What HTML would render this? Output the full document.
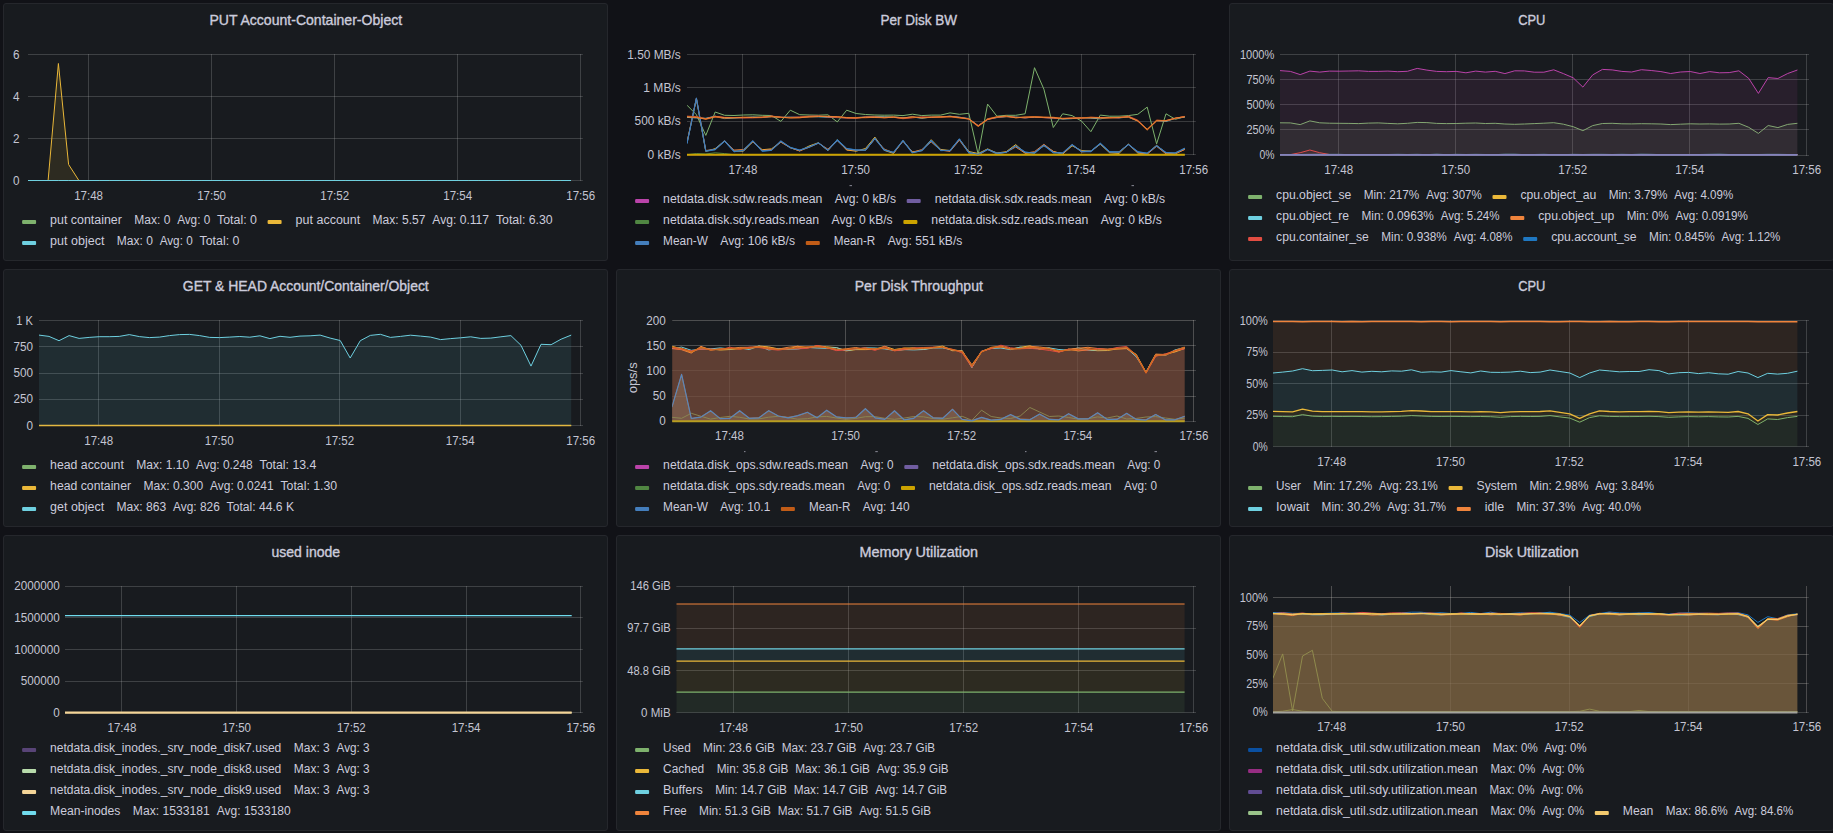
<!DOCTYPE html>
<html><head><meta charset="utf-8"><title>Dashboard</title>
<style>html,body{margin:0;padding:0;background:#111217;width:1833px;height:833px;overflow:hidden;font-family:"Liberation Sans",sans-serif}</style></head>
<body>
<svg width="1833" height="833" viewBox="0 0 1833 833" font-family="Liberation Sans, sans-serif" style="display:block;position:absolute;left:0;top:0">
<rect width="1833" height="833" fill="#111217"/>
<defs><clipPath id="c0"><rect x="28" y="51.5" width="552.8" height="131.0"/></clipPath><clipPath id="c1"><rect x="687" y="51.5" width="506.8" height="105.2"/></clipPath><clipPath id="c2"><rect x="1280" y="51.5" width="527.0" height="105.5"/></clipPath><clipPath id="c3"><rect x="39" y="317.5" width="542.0" height="110.0"/></clipPath><clipPath id="c4"><rect x="672.2" y="317.5" width="521.8" height="105.8"/></clipPath><clipPath id="c5"><rect x="1273" y="317.5" width="534.0" height="131.0"/></clipPath><clipPath id="c6"><rect x="65" y="583.2" width="515.8" height="131.4"/></clipPath><clipPath id="c7"><rect x="676.3" y="583.2" width="517.7" height="131.3"/></clipPath><clipPath id="c8"><rect x="1273" y="583.2" width="533.8" height="131.1"/></clipPath></defs>
<g id="p1"><rect x="3.5" y="3.5" width="604" height="257" rx="2.5" fill="#181b1f" stroke="#25272c"/>
<text x="209.41" y="24.50" font-size="14" fill="#ccccdc" textLength="192.78" lengthAdjust="spacingAndGlyphs" stroke="#ccccdc" stroke-width="0.35">PUT Account-Container-Object</text>
<rect x="28.0" y="54" width="554.8" height="1" fill="rgba(200,200,200,0.22)"/>
<rect x="28.0" y="96" width="554.8" height="1" fill="rgba(200,200,200,0.22)"/>
<rect x="28.0" y="138" width="554.8" height="1" fill="rgba(200,200,200,0.22)"/>
<rect x="28.0" y="180" width="554.8" height="1" fill="rgba(200,200,200,0.22)"/>
<rect x="88" y="54" width="1" height="127" fill="rgba(200,200,200,0.22)"/>
<rect x="211" y="54" width="1" height="127" fill="rgba(200,200,200,0.22)"/>
<rect x="334" y="54" width="1" height="127" fill="rgba(200,200,200,0.22)"/>
<rect x="457" y="54" width="1" height="127" fill="rgba(200,200,200,0.22)"/>
<rect x="580" y="54" width="1" height="127" fill="rgba(200,200,200,0.22)"/>
<g clip-path="url(#c0)"><polygon points="27.6,180.5 37.9,180.5 48.1,180.5 58.4,180.5 68.6,180.5 78.9,180.5 89.1,180.5 99.4,180.5 109.6,180.5 119.9,180.5 130.1,180.5 140.4,180.5 150.6,180.5 160.9,180.5 171.1,180.5 181.4,180.5 191.6,180.5 201.9,180.5 212.1,180.5 222.4,180.5 232.6,180.5 242.9,180.5 253.1,180.5 263.4,180.5 273.7,180.5 283.9,180.5 294.2,180.5 304.4,180.5 314.7,180.5 324.9,180.5 335.2,180.5 345.4,180.5 355.7,180.5 365.9,180.5 376.2,180.5 386.4,180.5 396.7,180.5 406.9,180.5 417.2,180.5 427.4,180.5 437.7,180.5 447.9,180.5 458.2,180.5 468.4,180.5 478.7,180.5 488.9,180.5 499.2,180.5 509.4,180.5 519.7,180.5 530.0,180.5 540.2,180.5 550.5,180.5 560.7,180.5 571.0,180.5 571.0,180.5 560.7,180.5 550.5,180.5 540.2,180.5 530.0,180.5 519.7,180.5 509.4,180.5 499.2,180.5 488.9,180.5 478.7,180.5 468.4,180.5 458.2,180.5 447.9,180.5 437.7,180.5 427.4,180.5 417.2,180.5 406.9,180.5 396.7,180.5 386.4,180.5 376.2,180.5 365.9,180.5 355.7,180.5 345.4,180.5 335.2,180.5 324.9,180.5 314.7,180.5 304.4,180.5 294.2,180.5 283.9,180.5 273.7,180.5 263.4,180.5 253.1,180.5 242.9,180.5 232.6,180.5 222.4,180.5 212.1,180.5 201.9,180.5 191.6,180.5 181.4,180.5 171.1,180.5 160.9,180.5 150.6,180.5 140.4,180.5 130.1,180.5 119.9,180.5 109.6,180.5 99.4,180.5 89.1,180.5 78.9,180.5 68.6,180.5 58.4,180.5 48.1,180.5 37.9,180.5 27.6,180.5" fill="#7EB26D" fill-opacity="0.1"/><polyline points="27.6,180.5 37.9,180.5 48.1,180.5 58.4,180.5 68.6,180.5 78.9,180.5 89.1,180.5 99.4,180.5 109.6,180.5 119.9,180.5 130.1,180.5 140.4,180.5 150.6,180.5 160.9,180.5 171.1,180.5 181.4,180.5 191.6,180.5 201.9,180.5 212.1,180.5 222.4,180.5 232.6,180.5 242.9,180.5 253.1,180.5 263.4,180.5 273.7,180.5 283.9,180.5 294.2,180.5 304.4,180.5 314.7,180.5 324.9,180.5 335.2,180.5 345.4,180.5 355.7,180.5 365.9,180.5 376.2,180.5 386.4,180.5 396.7,180.5 406.9,180.5 417.2,180.5 427.4,180.5 437.7,180.5 447.9,180.5 458.2,180.5 468.4,180.5 478.7,180.5 488.9,180.5 499.2,180.5 509.4,180.5 519.7,180.5 530.0,180.5 540.2,180.5 550.5,180.5 560.7,180.5 571.0,180.5" fill="none" stroke="#7EB26D" stroke-width="1.0" stroke-linejoin="round"/><polygon points="27.6,180.5 37.9,180.5 48.1,180.5 58.4,63.5 68.6,164.5 78.9,180.5 89.1,180.5 99.4,180.5 109.6,180.5 119.9,180.5 130.1,180.5 140.4,180.5 150.6,180.5 160.9,180.5 171.1,180.5 181.4,180.5 191.6,180.5 201.9,180.5 212.1,180.5 222.4,180.5 232.6,180.5 242.9,180.5 253.1,180.5 263.4,180.5 273.7,180.5 283.9,180.5 294.2,180.5 304.4,180.5 314.7,180.5 324.9,180.5 335.2,180.5 345.4,180.5 355.7,180.5 365.9,180.5 376.2,180.5 386.4,180.5 396.7,180.5 406.9,180.5 417.2,180.5 427.4,180.5 437.7,180.5 447.9,180.5 458.2,180.5 468.4,180.5 478.7,180.5 488.9,180.5 499.2,180.5 509.4,180.5 519.7,180.5 530.0,180.5 540.2,180.5 550.5,180.5 560.7,180.5 571.0,180.5 571.0,180.5 560.7,180.5 550.5,180.5 540.2,180.5 530.0,180.5 519.7,180.5 509.4,180.5 499.2,180.5 488.9,180.5 478.7,180.5 468.4,180.5 458.2,180.5 447.9,180.5 437.7,180.5 427.4,180.5 417.2,180.5 406.9,180.5 396.7,180.5 386.4,180.5 376.2,180.5 365.9,180.5 355.7,180.5 345.4,180.5 335.2,180.5 324.9,180.5 314.7,180.5 304.4,180.5 294.2,180.5 283.9,180.5 273.7,180.5 263.4,180.5 253.1,180.5 242.9,180.5 232.6,180.5 222.4,180.5 212.1,180.5 201.9,180.5 191.6,180.5 181.4,180.5 171.1,180.5 160.9,180.5 150.6,180.5 140.4,180.5 130.1,180.5 119.9,180.5 109.6,180.5 99.4,180.5 89.1,180.5 78.9,180.5 68.6,180.5 58.4,180.5 48.1,180.5 37.9,180.5 27.6,180.5" fill="#EAB839" fill-opacity="0.1"/><polyline points="27.6,180.5 37.9,180.5 48.1,180.5 58.4,63.5 68.6,164.5 78.9,180.5 89.1,180.5 99.4,180.5 109.6,180.5 119.9,180.5 130.1,180.5 140.4,180.5 150.6,180.5 160.9,180.5 171.1,180.5 181.4,180.5 191.6,180.5 201.9,180.5 212.1,180.5 222.4,180.5 232.6,180.5 242.9,180.5 253.1,180.5 263.4,180.5 273.7,180.5 283.9,180.5 294.2,180.5 304.4,180.5 314.7,180.5 324.9,180.5 335.2,180.5 345.4,180.5 355.7,180.5 365.9,180.5 376.2,180.5 386.4,180.5 396.7,180.5 406.9,180.5 417.2,180.5 427.4,180.5 437.7,180.5 447.9,180.5 458.2,180.5 468.4,180.5 478.7,180.5 488.9,180.5 499.2,180.5 509.4,180.5 519.7,180.5 530.0,180.5 540.2,180.5 550.5,180.5 560.7,180.5 571.0,180.5" fill="none" stroke="#EAB839" stroke-width="1.0" stroke-linejoin="round"/><polygon points="27.6,180.5 37.9,180.5 48.1,180.5 58.4,180.5 68.6,180.5 78.9,180.5 89.1,180.5 99.4,180.5 109.6,180.5 119.9,180.5 130.1,180.5 140.4,180.5 150.6,180.5 160.9,180.5 171.1,180.5 181.4,180.5 191.6,180.5 201.9,180.5 212.1,180.5 222.4,180.5 232.6,180.5 242.9,180.5 253.1,180.5 263.4,180.5 273.7,180.5 283.9,180.5 294.2,180.5 304.4,180.5 314.7,180.5 324.9,180.5 335.2,180.5 345.4,180.5 355.7,180.5 365.9,180.5 376.2,180.5 386.4,180.5 396.7,180.5 406.9,180.5 417.2,180.5 427.4,180.5 437.7,180.5 447.9,180.5 458.2,180.5 468.4,180.5 478.7,180.5 488.9,180.5 499.2,180.5 509.4,180.5 519.7,180.5 530.0,180.5 540.2,180.5 550.5,180.5 560.7,180.5 571.0,180.5 571.0,180.5 560.7,180.5 550.5,180.5 540.2,180.5 530.0,180.5 519.7,180.5 509.4,180.5 499.2,180.5 488.9,180.5 478.7,180.5 468.4,180.5 458.2,180.5 447.9,180.5 437.7,180.5 427.4,180.5 417.2,180.5 406.9,180.5 396.7,180.5 386.4,180.5 376.2,180.5 365.9,180.5 355.7,180.5 345.4,180.5 335.2,180.5 324.9,180.5 314.7,180.5 304.4,180.5 294.2,180.5 283.9,180.5 273.7,180.5 263.4,180.5 253.1,180.5 242.9,180.5 232.6,180.5 222.4,180.5 212.1,180.5 201.9,180.5 191.6,180.5 181.4,180.5 171.1,180.5 160.9,180.5 150.6,180.5 140.4,180.5 130.1,180.5 119.9,180.5 109.6,180.5 99.4,180.5 89.1,180.5 78.9,180.5 68.6,180.5 58.4,180.5 48.1,180.5 37.9,180.5 27.6,180.5" fill="#6ED0E0" fill-opacity="0.1"/><polyline points="27.6,180.5 37.9,180.5 48.1,180.5 58.4,180.5 68.6,180.5 78.9,180.5 89.1,180.5 99.4,180.5 109.6,180.5 119.9,180.5 130.1,180.5 140.4,180.5 150.6,180.5 160.9,180.5 171.1,180.5 181.4,180.5 191.6,180.5 201.9,180.5 212.1,180.5 222.4,180.5 232.6,180.5 242.9,180.5 253.1,180.5 263.4,180.5 273.7,180.5 283.9,180.5 294.2,180.5 304.4,180.5 314.7,180.5 324.9,180.5 335.2,180.5 345.4,180.5 355.7,180.5 365.9,180.5 376.2,180.5 386.4,180.5 396.7,180.5 406.9,180.5 417.2,180.5 427.4,180.5 437.7,180.5 447.9,180.5 458.2,180.5 468.4,180.5 478.7,180.5 488.9,180.5 499.2,180.5 509.4,180.5 519.7,180.5 530.0,180.5 540.2,180.5 550.5,180.5 560.7,180.5 571.0,180.5" fill="none" stroke="#6ED0E0" stroke-width="1.0" stroke-linejoin="round"/></g>
<text x="13.09" y="58.60" font-size="12" fill="#c4c5d2" textLength="6.51" lengthAdjust="spacingAndGlyphs">6</text>
<text x="13.09" y="100.60" font-size="12" fill="#c4c5d2" textLength="6.51" lengthAdjust="spacingAndGlyphs">4</text>
<text x="13.09" y="142.60" font-size="12" fill="#c4c5d2" textLength="6.51" lengthAdjust="spacingAndGlyphs">2</text>
<text x="13.09" y="184.60" font-size="12" fill="#c4c5d2" textLength="6.51" lengthAdjust="spacingAndGlyphs">0</text>
<text x="74.18" y="199.50" font-size="12" fill="#c4c5d2" textLength="28.84" lengthAdjust="spacingAndGlyphs">17:48</text>
<text x="197.20" y="199.50" font-size="12" fill="#c4c5d2" textLength="28.84" lengthAdjust="spacingAndGlyphs">17:50</text>
<text x="320.23" y="199.50" font-size="12" fill="#c4c5d2" textLength="28.84" lengthAdjust="spacingAndGlyphs">17:52</text>
<text x="443.25" y="199.50" font-size="12" fill="#c4c5d2" textLength="28.84" lengthAdjust="spacingAndGlyphs">17:54</text>
<text x="566.28" y="199.50" font-size="12" fill="#c4c5d2" textLength="28.84" lengthAdjust="spacingAndGlyphs">17:56</text>
<rect x="22.1" y="220.1" width="14" height="4" rx="1" fill="#7EB26D"/>
<text x="50.10" y="224.40" font-size="12" fill="#ccccdc" textLength="71.78" lengthAdjust="spacingAndGlyphs">put container</text>
<text x="134.28" y="224.40" font-size="12" fill="#ccccdc" textLength="36.06" lengthAdjust="spacingAndGlyphs">Max: 0</text>
<text x="177.13" y="224.40" font-size="12" fill="#ccccdc" textLength="33.06" lengthAdjust="spacingAndGlyphs">Avg: 0</text>
<text x="217.00" y="224.40" font-size="12" fill="#ccccdc" textLength="39.93" lengthAdjust="spacingAndGlyphs">Total: 0</text>
<rect x="267.6" y="220.1" width="14" height="4" rx="1" fill="#EAB839"/>
<text x="295.63" y="224.40" font-size="12" fill="#ccccdc" textLength="64.56" lengthAdjust="spacingAndGlyphs">put account</text>
<text x="372.59" y="224.40" font-size="12" fill="#ccccdc" textLength="52.93" lengthAdjust="spacingAndGlyphs">Max: 5.57</text>
<text x="432.32" y="224.40" font-size="12" fill="#ccccdc" textLength="56.78" lengthAdjust="spacingAndGlyphs">Avg: 0.117</text>
<text x="495.90" y="224.40" font-size="12" fill="#ccccdc" textLength="56.81" lengthAdjust="spacingAndGlyphs">Total: 6.30</text>
<rect x="22.1" y="241.1" width="14" height="4" rx="1" fill="#6ED0E0"/>
<text x="50.10" y="245.40" font-size="12" fill="#ccccdc" textLength="54.29" lengthAdjust="spacingAndGlyphs">put object</text>
<text x="116.79" y="245.40" font-size="12" fill="#ccccdc" textLength="36.06" lengthAdjust="spacingAndGlyphs">Max: 0</text>
<text x="159.65" y="245.40" font-size="12" fill="#ccccdc" textLength="33.06" lengthAdjust="spacingAndGlyphs">Avg: 0</text>
<text x="199.52" y="245.40" font-size="12" fill="#ccccdc" textLength="39.93" lengthAdjust="spacingAndGlyphs">Total: 0</text></g>
<g id="p2"><text x="880.48" y="24.50" font-size="14" fill="#ccccdc" textLength="76.64" lengthAdjust="spacingAndGlyphs" stroke="#ccccdc" stroke-width="0.35">Per Disk BW</text>
<rect x="687.0" y="54" width="508.8" height="1" fill="rgba(200,200,200,0.22)"/>
<rect x="687.0" y="87" width="508.8" height="1" fill="rgba(200,200,200,0.22)"/>
<rect x="687.0" y="121" width="508.8" height="1" fill="rgba(200,200,200,0.22)"/>
<rect x="687.0" y="154" width="508.8" height="1" fill="rgba(200,200,200,0.22)"/>
<rect x="742" y="54" width="1" height="101" fill="rgba(200,200,200,0.22)"/>
<rect x="855" y="54" width="1" height="101" fill="rgba(200,200,200,0.22)"/>
<rect x="968" y="54" width="1" height="101" fill="rgba(200,200,200,0.22)"/>
<rect x="1081" y="54" width="1" height="101" fill="rgba(200,200,200,0.22)"/>
<rect x="1193" y="54" width="1" height="101" fill="rgba(200,200,200,0.22)"/>
<g clip-path="url(#c1)"><polyline points="687.0,105.2 696.4,114.7 705.8,135.4 715.2,112.0 724.6,115.3 734.0,115.5 743.4,115.0 752.8,114.8 762.2,115.3 771.5,115.5 780.9,121.4 790.3,110.2 799.7,114.7 809.1,115.0 818.5,115.2 827.9,114.8 837.3,121.9 846.7,110.2 856.1,113.5 865.5,114.5 874.9,115.0 884.2,115.2 893.6,115.1 903.0,115.6 912.4,114.2 921.8,115.6 931.2,115.1 940.6,115.1 950.0,112.9 959.4,114.3 968.8,113.3 978.2,154.4 987.6,104.1 996.9,116.2 1006.3,115.3 1015.7,115.3 1025.1,113.8 1034.5,67.7 1043.9,89.2 1053.3,127.5 1062.7,113.8 1072.1,115.6 1081.5,121.1 1090.9,131.7 1100.3,115.1 1109.6,116.2 1119.0,116.2 1128.4,115.6 1137.8,114.3 1147.2,107.1 1156.6,143.9 1166.0,113.8 1175.4,119.3 1184.8,116.5" fill="none" stroke="#7EB26D" stroke-width="1.0" stroke-linejoin="round"/><polyline points="687.0,142.5 696.4,98.9 705.8,151.5 715.2,148.6 724.6,140.9 734.0,151.1 743.4,151.2 752.8,141.7 762.2,149.7 771.5,148.9 780.9,141.8 790.3,147.6 799.7,150.8 809.1,146.0 818.5,142.7 827.9,150.7 837.3,139.6 846.7,150.0 856.1,151.2 865.5,148.5 874.9,137.1 884.2,150.3 893.6,153.4 903.0,140.6 912.4,152.0 921.8,150.6 931.2,139.7 940.6,149.4 950.0,150.6 959.4,139.2 968.8,151.5 978.2,153.5 987.6,148.9 996.9,153.0 1006.3,151.7 1015.7,144.6 1025.1,153.1 1034.5,152.9 1043.9,145.6 1053.3,151.4 1062.7,154.0 1072.1,145.8 1081.5,150.6 1090.9,151.1 1100.3,144.2 1109.6,152.8 1119.0,153.4 1128.4,144.1 1137.8,153.1 1147.2,153.6 1156.6,145.3 1166.0,153.0 1175.4,153.7 1184.8,149.1" fill="none" stroke="#EAB839" stroke-width="1.0" stroke-linejoin="round"/><polyline points="687.0,117.4 696.4,117.9 705.8,118.3 715.2,116.2 724.6,118.6 734.0,118.0 743.4,117.6 752.8,117.0 762.2,117.4 771.5,116.6 780.9,117.4 790.3,117.2 799.7,117.4 809.1,116.7 818.5,116.8 827.9,117.2 837.3,117.6 846.7,117.7 856.1,117.6 865.5,117.1 874.9,116.5 884.2,116.8 893.6,116.9 903.0,117.8 912.4,117.0 921.8,118.2 931.2,117.1 940.6,117.0 950.0,116.2 959.4,117.2 968.8,118.6 978.2,125.7 987.6,119.0 996.9,117.6 1006.3,116.6 1015.7,117.1 1025.1,117.8 1034.5,117.2 1043.9,117.5 1053.3,118.1 1062.7,119.0 1072.1,118.6 1081.5,117.6 1090.9,118.1 1100.3,118.8 1109.6,117.4 1119.0,117.8 1128.4,117.2 1137.8,120.9 1147.2,129.8 1156.6,120.5 1166.0,121.4 1175.4,118.4 1184.8,117.2" fill="none" stroke="#6ED0E0" stroke-width="1.0" stroke-linejoin="round"/><polyline points="687.0,142.8 696.4,98.1 705.8,150.5 715.2,149.5 724.6,141.2 734.0,150.1 743.4,149.5 752.8,141.8 762.2,150.2 771.5,149.5 780.9,142.2 790.3,147.7 799.7,151.0 809.1,147.2 818.5,143.2 827.9,149.2 837.3,140.6 846.7,149.8 856.1,150.2 865.5,150.4 874.9,138.8 884.2,149.0 893.6,152.9 903.0,141.2 912.4,152.2 921.8,149.6 931.2,141.9 940.6,150.1 950.0,151.4 959.4,140.2 968.8,152.8 978.2,155.3 987.6,149.4 996.9,153.9 1006.3,152.1 1015.7,147.0 1025.1,153.2 1034.5,151.7 1043.9,144.3 1053.3,151.5 1062.7,154.0 1072.1,144.7 1081.5,151.9 1090.9,151.1 1100.3,143.7 1109.6,151.9 1119.0,151.8 1128.4,144.5 1137.8,152.4 1147.2,154.2 1156.6,146.3 1166.0,153.9 1175.4,153.7 1184.8,149.5" fill="none" stroke="#EF843C" stroke-width="1.0" stroke-linejoin="round"/><polyline points="687.0,116.2 696.4,116.6 705.8,118.8 715.2,116.3 724.6,117.4 734.0,117.5 743.4,118.0 752.8,117.8 762.2,117.6 771.5,116.0 780.9,117.3 790.3,117.4 799.7,117.0 809.1,116.2 818.5,116.0 827.9,117.0 837.3,117.4 846.7,118.1 856.1,118.2 865.5,117.0 874.9,116.9 884.2,117.7 893.6,117.3 903.0,118.7 912.4,117.8 921.8,116.9 931.2,117.2 940.6,117.2 950.0,116.7 959.4,117.4 968.8,118.9 978.2,125.6 987.6,119.7 996.9,117.4 1006.3,116.4 1015.7,117.3 1025.1,117.9 1034.5,116.8 1043.9,117.7 1053.3,118.1 1062.7,118.6 1072.1,118.0 1081.5,118.0 1090.9,117.3 1100.3,117.5 1109.6,117.6 1119.0,117.9 1128.4,116.1 1137.8,120.2 1147.2,129.9 1156.6,120.2 1166.0,120.8 1175.4,118.3 1184.8,116.4" fill="none" stroke="#E24D42" stroke-width="1.0" stroke-linejoin="round"/><polyline points="687.0,143.7 696.4,98.4 705.8,151.3 715.2,149.9 724.6,141.3 734.0,151.9 743.4,150.0 752.8,140.9 762.2,151.5 771.5,150.4 780.9,141.6 790.3,147.2 799.7,150.1 809.1,146.9 818.5,142.9 827.9,150.3 837.3,139.5 846.7,148.4 856.1,149.8 865.5,150.4 874.9,138.7 884.2,149.6 893.6,152.7 903.0,140.3 912.4,152.9 921.8,150.2 931.2,140.1 940.6,150.7 950.0,150.3 959.4,138.8 968.8,153.0 978.2,154.8 987.6,149.3 996.9,153.9 1006.3,152.3 1015.7,146.1 1025.1,151.8 1034.5,153.5 1043.9,145.5 1053.3,153.0 1062.7,153.4 1072.1,144.5 1081.5,151.4 1090.9,151.0 1100.3,143.1 1109.6,151.5 1119.0,151.9 1128.4,144.5 1137.8,151.4 1147.2,153.4 1156.6,145.6 1166.0,152.4 1175.4,153.3 1184.8,148.2" fill="none" stroke="#1F78C1" stroke-width="1.0" stroke-linejoin="round"/><polyline points="687.0,154.7 696.4,154.7 705.8,154.7 715.2,154.7 724.6,154.7 734.0,154.7 743.4,154.7 752.8,154.7 762.2,154.7 771.5,154.7 780.9,154.7 790.3,154.7 799.7,154.7 809.1,154.7 818.5,154.7 827.9,154.7 837.3,154.7 846.7,154.7 856.1,154.7 865.5,154.7 874.9,154.7 884.2,154.7 893.6,154.7 903.0,154.7 912.4,154.7 921.8,154.7 931.2,154.7 940.6,154.7 950.0,154.7 959.4,154.7 968.8,154.7 978.2,154.7 987.6,154.7 996.9,154.7 1006.3,154.7 1015.7,154.7 1025.1,154.7 1034.5,154.7 1043.9,154.7 1053.3,154.7 1062.7,154.7 1072.1,154.7 1081.5,154.7 1090.9,154.7 1100.3,154.7 1109.6,154.7 1119.0,154.7 1128.4,154.7 1137.8,154.7 1147.2,154.7 1156.6,154.7 1166.0,154.7 1175.4,154.7 1184.8,154.7" fill="none" stroke="#BA43A9" stroke-width="1.0" stroke-linejoin="round"/><polyline points="687.0,154.7 696.4,154.7 705.8,154.7 715.2,154.7 724.6,154.7 734.0,154.7 743.4,154.7 752.8,154.7 762.2,154.7 771.5,154.7 780.9,154.7 790.3,154.7 799.7,154.7 809.1,154.7 818.5,154.7 827.9,154.7 837.3,154.7 846.7,154.7 856.1,154.7 865.5,154.7 874.9,154.7 884.2,154.7 893.6,154.7 903.0,154.7 912.4,154.7 921.8,154.7 931.2,154.7 940.6,154.7 950.0,154.7 959.4,154.7 968.8,154.7 978.2,154.7 987.6,154.7 996.9,154.7 1006.3,154.7 1015.7,154.7 1025.1,154.7 1034.5,154.7 1043.9,154.7 1053.3,154.7 1062.7,154.7 1072.1,154.7 1081.5,154.7 1090.9,154.7 1100.3,154.7 1109.6,154.7 1119.0,154.7 1128.4,154.7 1137.8,154.7 1147.2,154.7 1156.6,154.7 1166.0,154.7 1175.4,154.7 1184.8,154.7" fill="none" stroke="#705DA0" stroke-width="1.0" stroke-linejoin="round"/><polyline points="687.0,154.7 696.4,153.6 705.8,154.0 715.2,152.8 724.6,153.6 734.0,154.7 743.4,154.7 752.8,154.7 762.2,154.7 771.5,154.7 780.9,154.7 790.3,154.7 799.7,154.7 809.1,154.7 818.5,154.7 827.9,154.7 837.3,154.7 846.7,154.7 856.1,154.7 865.5,154.7 874.9,154.7 884.2,154.7 893.6,154.7 903.0,154.7 912.4,154.7 921.8,154.7 931.2,154.7 940.6,154.7 950.0,154.7 959.4,154.7 968.8,154.7 978.2,154.7 987.6,154.7 996.9,154.7 1006.3,154.7 1015.7,154.7 1025.1,154.7 1034.5,154.7 1043.9,154.7 1053.3,154.7 1062.7,154.7 1072.1,154.7 1081.5,154.7 1090.9,154.7 1100.3,154.7 1109.6,154.7 1119.0,154.7 1128.4,154.7 1137.8,154.7 1147.2,154.7 1156.6,154.7 1166.0,154.7 1175.4,154.7 1184.8,154.7" fill="none" stroke="#508642" stroke-width="1.0" stroke-linejoin="round"/><polyline points="687.0,154.7 696.4,154.7 705.8,154.7 715.2,154.7 724.6,154.7 734.0,154.7 743.4,154.7 752.8,154.7 762.2,154.7 771.5,154.7 780.9,154.7 790.3,154.7 799.7,154.7 809.1,154.7 818.5,154.7 827.9,154.7 837.3,154.7 846.7,154.7 856.1,154.7 865.5,154.7 874.9,154.7 884.2,154.7 893.6,154.7 903.0,154.7 912.4,154.7 921.8,154.7 931.2,154.7 940.6,154.7 950.0,154.7 959.4,154.7 968.8,154.7 978.2,154.7 987.6,154.7 996.9,154.7 1006.3,154.7 1015.7,154.7 1025.1,154.7 1034.5,154.7 1043.9,154.7 1053.3,154.7 1062.7,154.7 1072.1,154.7 1081.5,154.7 1090.9,154.7 1100.3,154.7 1109.6,154.7 1119.0,154.7 1128.4,154.7 1137.8,154.7 1147.2,154.7 1156.6,154.7 1166.0,154.7 1175.4,154.7 1184.8,154.7" fill="none" stroke="#CCA300" stroke-width="2" stroke-linejoin="round"/><polyline points="687.0,143.5 696.4,98.0 705.8,150.8 715.2,149.2 724.6,140.9 734.0,151.2 743.4,150.8 752.8,140.9 762.2,150.8 771.5,150.1 780.9,140.9 790.3,147.8 799.7,150.1 809.1,147.3 818.5,142.9 827.9,150.1 837.3,140.3 846.7,148.8 856.1,150.1 865.5,149.8 874.9,138.3 884.2,150.1 893.6,152.2 903.0,140.9 912.4,152.8 921.8,150.8 931.2,140.9 940.6,150.1 950.0,150.8 959.4,139.2 968.8,152.2 978.2,154.2 987.6,149.6 996.9,153.1 1006.3,152.2 1015.7,145.9 1025.1,152.2 1034.5,152.8 1043.9,145.2 1053.3,152.2 1062.7,152.8 1072.1,144.8 1081.5,151.6 1090.9,151.6 1100.3,143.6 1109.6,152.2 1119.0,152.2 1128.4,144.3 1137.8,152.2 1147.2,153.1 1156.6,145.9 1166.0,152.8 1175.4,152.8 1184.8,148.2" fill="none" stroke="#447EBC" stroke-width="1.1" stroke-linejoin="round"/><polyline points="687.0,116.7 696.4,117.2 705.8,119.0 715.2,116.9 724.6,118.0 734.0,117.6 743.4,117.3 752.8,117.3 762.2,117.2 771.5,116.4 780.9,117.3 790.3,117.7 799.7,117.5 809.1,116.9 818.5,116.4 827.9,116.4 837.3,116.9 846.7,117.6 856.1,117.7 865.5,117.5 874.9,117.2 884.2,117.5 893.6,117.0 903.0,118.1 912.4,117.2 921.8,117.6 931.2,117.1 940.6,117.0 950.0,116.7 959.4,117.9 968.8,118.9 978.2,126.3 987.6,119.0 996.9,116.8 1006.3,116.3 1015.7,117.6 1025.1,117.2 1034.5,116.7 1043.9,117.1 1053.3,117.5 1062.7,118.5 1072.1,118.1 1081.5,117.8 1090.9,117.4 1100.3,118.0 1109.6,117.9 1119.0,117.4 1128.4,116.9 1137.8,120.9 1147.2,129.7 1156.6,120.5 1166.0,120.7 1175.4,118.4 1184.8,116.7" fill="none" stroke="#C15C17" stroke-width="1.3" stroke-linejoin="round"/><polyline points="687.0,116.9 696.4,117.5 705.8,119.0 715.2,116.7 724.6,117.6 734.0,117.8 743.4,117.3 752.8,117.6 762.2,117.1 771.5,116.7 780.9,117.1 790.3,118.0 799.7,117.7 809.1,116.8 818.5,116.5 827.9,116.5 837.3,116.6 846.7,117.7 856.1,118.0 865.5,117.3 874.9,117.5 884.2,117.7 893.6,117.3 903.0,118.0 912.4,116.8 921.8,117.9 931.2,117.4 940.6,116.9 950.0,116.3 959.4,117.6 968.8,119.0 978.2,126.1 987.6,119.4 996.9,116.9 1006.3,116.0 1015.7,117.8 1025.1,117.1 1034.5,117.1 1043.9,117.4 1053.3,117.5 1062.7,118.7 1072.1,118.3 1081.5,118.1 1090.9,117.8 1100.3,117.6 1109.6,117.8 1119.0,117.5 1128.4,116.7 1137.8,121.0 1147.2,129.3 1156.6,120.9 1166.0,120.7 1175.4,118.0 1184.8,116.8" fill="none" stroke="#EF843C" stroke-width="0.9" stroke-linejoin="round"/></g>
<text x="627.26" y="58.60" font-size="12" fill="#c4c5d2" textLength="53.54" lengthAdjust="spacingAndGlyphs">1.50 MB/s</text>
<text x="643.33" y="92.00" font-size="12" fill="#c4c5d2" textLength="37.47" lengthAdjust="spacingAndGlyphs">1 MB/s</text>
<text x="634.56" y="125.40" font-size="12" fill="#c4c5d2" textLength="46.24" lengthAdjust="spacingAndGlyphs">500 kB/s</text>
<text x="647.57" y="158.80" font-size="12" fill="#c4c5d2" textLength="33.23" lengthAdjust="spacingAndGlyphs">0 kB/s</text>
<text x="728.48" y="173.70" font-size="12" fill="#c4c5d2" textLength="28.84" lengthAdjust="spacingAndGlyphs">17:48</text>
<text x="841.18" y="173.70" font-size="12" fill="#c4c5d2" textLength="28.84" lengthAdjust="spacingAndGlyphs">17:50</text>
<text x="953.88" y="173.70" font-size="12" fill="#c4c5d2" textLength="28.84" lengthAdjust="spacingAndGlyphs">17:52</text>
<text x="1066.58" y="173.70" font-size="12" fill="#c4c5d2" textLength="28.84" lengthAdjust="spacingAndGlyphs">17:54</text>
<text x="1179.28" y="173.70" font-size="12" fill="#c4c5d2" textLength="28.84" lengthAdjust="spacingAndGlyphs">17:56</text>
<rect x="635.1" y="199.1" width="14" height="4" rx="1" fill="#BA43A9"/>
<text x="663.10" y="203.40" font-size="12" fill="#ccccdc" textLength="159.36" lengthAdjust="spacingAndGlyphs">netdata.disk.sdw.reads.mean</text>
<text x="834.86" y="203.40" font-size="12" fill="#ccccdc" textLength="61.11" lengthAdjust="spacingAndGlyphs">Avg: 0 kB/s</text>
<rect x="906.7" y="199.1" width="14" height="4" rx="1" fill="#705DA0"/>
<text x="934.67" y="203.40" font-size="12" fill="#ccccdc" textLength="156.97" lengthAdjust="spacingAndGlyphs">netdata.disk.sdx.reads.mean</text>
<text x="1104.05" y="203.40" font-size="12" fill="#ccccdc" textLength="61.11" lengthAdjust="spacingAndGlyphs">Avg: 0 kB/s</text>
<rect x="635.1" y="220.1" width="14" height="4" rx="1" fill="#508642"/>
<text x="663.10" y="224.40" font-size="12" fill="#ccccdc" textLength="156.05" lengthAdjust="spacingAndGlyphs">netdata.disk.sdy.reads.mean</text>
<text x="831.55" y="224.40" font-size="12" fill="#ccccdc" textLength="61.11" lengthAdjust="spacingAndGlyphs">Avg: 0 kB/s</text>
<rect x="903.4" y="220.1" width="14" height="4" rx="1" fill="#CCA300"/>
<text x="931.36" y="224.40" font-size="12" fill="#ccccdc" textLength="156.97" lengthAdjust="spacingAndGlyphs">netdata.disk.sdz.reads.mean</text>
<text x="1100.74" y="224.40" font-size="12" fill="#ccccdc" textLength="61.11" lengthAdjust="spacingAndGlyphs">Avg: 0 kB/s</text>
<rect x="635.1" y="241.1" width="14" height="4" rx="1" fill="#447EBC"/>
<text x="663.10" y="245.40" font-size="12" fill="#ccccdc" textLength="44.80" lengthAdjust="spacingAndGlyphs">Mean-W</text>
<text x="720.30" y="245.40" font-size="12" fill="#ccccdc" textLength="74.77" lengthAdjust="spacingAndGlyphs">Avg: 106 kB/s</text>
<rect x="805.8" y="241.1" width="14" height="4" rx="1" fill="#C15C17"/>
<text x="833.78" y="245.40" font-size="12" fill="#ccccdc" textLength="41.49" lengthAdjust="spacingAndGlyphs">Mean-R</text>
<text x="887.67" y="245.40" font-size="12" fill="#ccccdc" textLength="74.77" lengthAdjust="spacingAndGlyphs">Avg: 551 kB/s</text>
<rect x="849.5" y="185.3" width="2.5" height="0.8" fill="#ccccdc" opacity="0.8"/>
<rect x="1131.5" y="185.3" width="2.5" height="0.8" fill="#ccccdc" opacity="0.8"/></g>
<g id="p3"><rect x="1229.5" y="3.5" width="604" height="257" rx="2.5" fill="#181b1f" stroke="#25272c"/>
<text x="1518.18" y="24.50" font-size="14" fill="#ccccdc" textLength="27.23" lengthAdjust="spacingAndGlyphs" stroke="#ccccdc" stroke-width="0.35">CPU</text>
<rect x="1280.0" y="54" width="529.0" height="1" fill="rgba(200,200,200,0.22)"/>
<rect x="1280.0" y="79" width="529.0" height="1" fill="rgba(200,200,200,0.22)"/>
<rect x="1280.0" y="104" width="529.0" height="1" fill="rgba(200,200,200,0.22)"/>
<rect x="1280.0" y="129" width="529.0" height="1" fill="rgba(200,200,200,0.22)"/>
<rect x="1280.0" y="155" width="529.0" height="1" fill="rgba(200,200,200,0.22)"/>
<rect x="1338" y="54" width="1" height="102" fill="rgba(200,200,200,0.22)"/>
<rect x="1455" y="54" width="1" height="102" fill="rgba(200,200,200,0.22)"/>
<rect x="1572" y="54" width="1" height="102" fill="rgba(200,200,200,0.22)"/>
<rect x="1689" y="54" width="1" height="102" fill="rgba(200,200,200,0.22)"/>
<rect x="1806" y="54" width="1" height="102" fill="rgba(200,200,200,0.22)"/>
<g clip-path="url(#c2)"><polygon points="1280.0,122.8 1290.4,122.9 1300.2,124.6 1309.9,120.9 1319.7,122.8 1329.4,123.2 1339.2,123.3 1348.9,123.4 1358.7,123.6 1368.4,123.1 1378.2,122.9 1387.9,123.4 1397.7,123.8 1407.4,123.3 1417.2,122.4 1426.9,122.6 1436.7,123.4 1446.4,123.6 1456.2,123.5 1465.9,123.2 1475.7,123.0 1485.4,123.5 1495.2,123.3 1504.9,124.0 1514.7,124.3 1524.4,124.0 1534.2,123.6 1543.9,123.2 1553.7,122.7 1563.4,124.2 1573.2,126.7 1582.9,130.7 1592.7,125.6 1602.4,123.5 1612.2,123.3 1621.9,123.8 1631.7,123.9 1641.4,123.7 1651.2,123.8 1660.9,124.0 1670.7,124.6 1680.4,124.2 1690.2,123.8 1699.9,124.0 1709.7,123.9 1719.4,124.1 1729.2,124.0 1738.9,123.3 1748.7,127.3 1758.4,133.4 1768.2,125.5 1777.9,127.6 1787.7,124.4 1797.4,123.3 1797.4,155.0 1787.7,155.0 1777.9,155.0 1768.2,155.0 1758.4,155.0 1748.7,155.0 1738.9,155.0 1729.2,155.0 1719.4,155.0 1709.7,155.0 1699.9,155.0 1690.2,155.0 1680.4,155.0 1670.7,155.0 1660.9,155.0 1651.2,155.0 1641.4,155.0 1631.7,155.0 1621.9,155.0 1612.2,155.0 1602.4,155.0 1592.7,155.0 1582.9,155.0 1573.2,155.0 1563.4,155.0 1553.7,155.0 1543.9,155.0 1534.2,155.0 1524.4,155.0 1514.7,155.0 1504.9,155.0 1495.2,155.0 1485.4,155.0 1475.7,155.0 1465.9,155.0 1456.2,155.0 1446.4,155.0 1436.7,155.0 1426.9,155.0 1417.2,155.0 1407.4,155.0 1397.7,155.0 1387.9,155.0 1378.2,155.0 1368.4,155.0 1358.7,155.0 1348.9,155.0 1339.2,155.0 1329.4,155.0 1319.7,155.0 1309.9,155.0 1300.2,155.0 1290.4,155.0 1280.0,155.0" fill="#7EB26D" fill-opacity="0.1"/><polyline points="1280.0,122.8 1290.4,122.9 1300.2,124.6 1309.9,120.9 1319.7,122.8 1329.4,123.2 1339.2,123.3 1348.9,123.4 1358.7,123.6 1368.4,123.1 1378.2,122.9 1387.9,123.4 1397.7,123.8 1407.4,123.3 1417.2,122.4 1426.9,122.6 1436.7,123.4 1446.4,123.6 1456.2,123.5 1465.9,123.2 1475.7,123.0 1485.4,123.5 1495.2,123.3 1504.9,124.0 1514.7,124.3 1524.4,124.0 1534.2,123.6 1543.9,123.2 1553.7,122.7 1563.4,124.2 1573.2,126.7 1582.9,130.7 1592.7,125.6 1602.4,123.5 1612.2,123.3 1621.9,123.8 1631.7,123.9 1641.4,123.7 1651.2,123.8 1660.9,124.0 1670.7,124.6 1680.4,124.2 1690.2,123.8 1699.9,124.0 1709.7,123.9 1719.4,124.1 1729.2,124.0 1738.9,123.3 1748.7,127.3 1758.4,133.4 1768.2,125.5 1777.9,127.6 1787.7,124.4 1797.4,123.3" fill="none" stroke="#7EB26D" stroke-width="1.0" stroke-linejoin="round"/><polygon points="1280.0,154.6 1290.4,154.6 1300.2,154.6 1309.9,154.6 1319.7,154.6 1329.4,154.6 1339.2,154.6 1348.9,154.6 1358.7,154.6 1368.4,154.6 1378.2,154.5 1387.9,154.6 1397.7,154.5 1407.4,154.6 1417.2,154.6 1426.9,154.5 1436.7,154.6 1446.4,154.6 1456.2,154.6 1465.9,154.6 1475.7,154.6 1485.4,154.5 1495.2,154.6 1504.9,154.5 1514.7,154.6 1524.4,154.6 1534.2,154.5 1543.9,154.6 1553.7,154.6 1563.4,154.6 1573.2,154.6 1582.9,154.6 1592.7,154.6 1602.4,154.6 1612.2,154.6 1621.9,154.6 1631.7,154.6 1641.4,154.6 1651.2,154.6 1660.9,154.6 1670.7,154.6 1680.4,154.6 1690.2,154.6 1699.9,154.5 1709.7,154.6 1719.4,154.6 1729.2,154.6 1738.9,154.6 1748.7,154.6 1758.4,154.6 1768.2,154.5 1777.9,154.6 1787.7,154.6 1797.4,154.6 1797.4,155.0 1787.7,155.0 1777.9,155.0 1768.2,155.0 1758.4,155.0 1748.7,155.0 1738.9,155.0 1729.2,155.0 1719.4,155.0 1709.7,155.0 1699.9,155.0 1690.2,155.0 1680.4,155.0 1670.7,155.0 1660.9,155.0 1651.2,155.0 1641.4,155.0 1631.7,155.0 1621.9,155.0 1612.2,155.0 1602.4,155.0 1592.7,155.0 1582.9,155.0 1573.2,155.0 1563.4,155.0 1553.7,155.0 1543.9,155.0 1534.2,155.0 1524.4,155.0 1514.7,155.0 1504.9,155.0 1495.2,155.0 1485.4,155.0 1475.7,155.0 1465.9,155.0 1456.2,155.0 1446.4,155.0 1436.7,155.0 1426.9,155.0 1417.2,155.0 1407.4,155.0 1397.7,155.0 1387.9,155.0 1378.2,155.0 1368.4,155.0 1358.7,155.0 1348.9,155.0 1339.2,155.0 1329.4,155.0 1319.7,155.0 1309.9,155.0 1300.2,155.0 1290.4,155.0 1280.0,155.0" fill="#EAB839" fill-opacity="0.1"/><polyline points="1280.0,154.6 1290.4,154.6 1300.2,154.6 1309.9,154.6 1319.7,154.6 1329.4,154.6 1339.2,154.6 1348.9,154.6 1358.7,154.6 1368.4,154.6 1378.2,154.5 1387.9,154.6 1397.7,154.5 1407.4,154.6 1417.2,154.6 1426.9,154.5 1436.7,154.6 1446.4,154.6 1456.2,154.6 1465.9,154.6 1475.7,154.6 1485.4,154.5 1495.2,154.6 1504.9,154.5 1514.7,154.6 1524.4,154.6 1534.2,154.5 1543.9,154.6 1553.7,154.6 1563.4,154.6 1573.2,154.6 1582.9,154.6 1592.7,154.6 1602.4,154.6 1612.2,154.6 1621.9,154.6 1631.7,154.6 1641.4,154.6 1651.2,154.6 1660.9,154.6 1670.7,154.6 1680.4,154.6 1690.2,154.6 1699.9,154.5 1709.7,154.6 1719.4,154.6 1729.2,154.6 1738.9,154.6 1748.7,154.6 1758.4,154.6 1768.2,154.5 1777.9,154.6 1787.7,154.6 1797.4,154.6" fill="none" stroke="#EAB839" stroke-width="1.0" stroke-linejoin="round"/><polygon points="1280.0,154.5 1290.4,154.5 1300.2,154.5 1309.9,154.4 1319.7,154.3 1329.4,154.4 1339.2,154.4 1348.9,154.6 1358.7,154.5 1368.4,154.5 1378.2,154.5 1387.9,154.5 1397.7,154.4 1407.4,154.5 1417.2,154.4 1426.9,154.6 1436.7,154.3 1446.4,154.6 1456.2,154.4 1465.9,154.5 1475.7,154.4 1485.4,154.5 1495.2,154.6 1504.9,154.3 1514.7,154.3 1524.4,154.6 1534.2,154.5 1543.9,154.4 1553.7,154.6 1563.4,154.6 1573.2,154.4 1582.9,154.5 1592.7,154.4 1602.4,154.4 1612.2,154.5 1621.9,154.4 1631.7,154.5 1641.4,154.3 1651.2,154.4 1660.9,154.6 1670.7,154.5 1680.4,154.5 1690.2,154.5 1699.9,154.5 1709.7,154.4 1719.4,154.3 1729.2,154.5 1738.9,154.6 1748.7,154.6 1758.4,154.5 1768.2,154.4 1777.9,154.4 1787.7,154.5 1797.4,154.5 1797.4,155.0 1787.7,155.0 1777.9,155.0 1768.2,155.0 1758.4,155.0 1748.7,155.0 1738.9,155.0 1729.2,155.0 1719.4,155.0 1709.7,155.0 1699.9,155.0 1690.2,155.0 1680.4,155.0 1670.7,155.0 1660.9,155.0 1651.2,155.0 1641.4,155.0 1631.7,155.0 1621.9,155.0 1612.2,155.0 1602.4,155.0 1592.7,155.0 1582.9,155.0 1573.2,155.0 1563.4,155.0 1553.7,155.0 1543.9,155.0 1534.2,155.0 1524.4,155.0 1514.7,155.0 1504.9,155.0 1495.2,155.0 1485.4,155.0 1475.7,155.0 1465.9,155.0 1456.2,155.0 1446.4,155.0 1436.7,155.0 1426.9,155.0 1417.2,155.0 1407.4,155.0 1397.7,155.0 1387.9,155.0 1378.2,155.0 1368.4,155.0 1358.7,155.0 1348.9,155.0 1339.2,155.0 1329.4,155.0 1319.7,155.0 1309.9,155.0 1300.2,155.0 1290.4,155.0 1280.0,155.0" fill="#6ED0E0" fill-opacity="0.1"/><polyline points="1280.0,154.5 1290.4,154.5 1300.2,154.5 1309.9,154.4 1319.7,154.3 1329.4,154.4 1339.2,154.4 1348.9,154.6 1358.7,154.5 1368.4,154.5 1378.2,154.5 1387.9,154.5 1397.7,154.4 1407.4,154.5 1417.2,154.4 1426.9,154.6 1436.7,154.3 1446.4,154.6 1456.2,154.4 1465.9,154.5 1475.7,154.4 1485.4,154.5 1495.2,154.6 1504.9,154.3 1514.7,154.3 1524.4,154.6 1534.2,154.5 1543.9,154.4 1553.7,154.6 1563.4,154.6 1573.2,154.4 1582.9,154.5 1592.7,154.4 1602.4,154.4 1612.2,154.5 1621.9,154.4 1631.7,154.5 1641.4,154.3 1651.2,154.4 1660.9,154.6 1670.7,154.5 1680.4,154.5 1690.2,154.5 1699.9,154.5 1709.7,154.4 1719.4,154.3 1729.2,154.5 1738.9,154.6 1748.7,154.6 1758.4,154.5 1768.2,154.4 1777.9,154.4 1787.7,154.5 1797.4,154.5" fill="none" stroke="#6ED0E0" stroke-width="1.0" stroke-linejoin="round"/><polygon points="1280.0,155.0 1290.4,155.0 1300.2,155.0 1309.9,155.0 1319.7,155.0 1329.4,155.0 1339.2,155.0 1348.9,155.0 1358.7,155.0 1368.4,155.0 1378.2,155.0 1387.9,155.0 1397.7,155.0 1407.4,155.0 1417.2,155.0 1426.9,155.0 1436.7,155.0 1446.4,155.0 1456.2,155.0 1465.9,155.0 1475.7,155.0 1485.4,155.0 1495.2,155.0 1504.9,155.0 1514.7,155.0 1524.4,155.0 1534.2,155.0 1543.9,155.0 1553.7,155.0 1563.4,155.0 1573.2,155.0 1582.9,155.0 1592.7,155.0 1602.4,155.0 1612.2,155.0 1621.9,155.0 1631.7,155.0 1641.4,155.0 1651.2,155.0 1660.9,155.0 1670.7,155.0 1680.4,155.0 1690.2,155.0 1699.9,155.0 1709.7,155.0 1719.4,155.0 1729.2,155.0 1738.9,155.0 1748.7,155.0 1758.4,155.0 1768.2,155.0 1777.9,155.0 1787.7,155.0 1797.4,155.0 1797.4,155.0 1787.7,155.0 1777.9,155.0 1768.2,155.0 1758.4,155.0 1748.7,155.0 1738.9,155.0 1729.2,155.0 1719.4,155.0 1709.7,155.0 1699.9,155.0 1690.2,155.0 1680.4,155.0 1670.7,155.0 1660.9,155.0 1651.2,155.0 1641.4,155.0 1631.7,155.0 1621.9,155.0 1612.2,155.0 1602.4,155.0 1592.7,155.0 1582.9,155.0 1573.2,155.0 1563.4,155.0 1553.7,155.0 1543.9,155.0 1534.2,155.0 1524.4,155.0 1514.7,155.0 1504.9,155.0 1495.2,155.0 1485.4,155.0 1475.7,155.0 1465.9,155.0 1456.2,155.0 1446.4,155.0 1436.7,155.0 1426.9,155.0 1417.2,155.0 1407.4,155.0 1397.7,155.0 1387.9,155.0 1378.2,155.0 1368.4,155.0 1358.7,155.0 1348.9,155.0 1339.2,155.0 1329.4,155.0 1319.7,155.0 1309.9,155.0 1300.2,155.0 1290.4,155.0 1280.0,155.0" fill="#EF843C" fill-opacity="0.1"/><polyline points="1280.0,155.0 1290.4,155.0 1300.2,155.0 1309.9,155.0 1319.7,155.0 1329.4,155.0 1339.2,155.0 1348.9,155.0 1358.7,155.0 1368.4,155.0 1378.2,155.0 1387.9,155.0 1397.7,155.0 1407.4,155.0 1417.2,155.0 1426.9,155.0 1436.7,155.0 1446.4,155.0 1456.2,155.0 1465.9,155.0 1475.7,155.0 1485.4,155.0 1495.2,155.0 1504.9,155.0 1514.7,155.0 1524.4,155.0 1534.2,155.0 1543.9,155.0 1553.7,155.0 1563.4,155.0 1573.2,155.0 1582.9,155.0 1592.7,155.0 1602.4,155.0 1612.2,155.0 1621.9,155.0 1631.7,155.0 1641.4,155.0 1651.2,155.0 1660.9,155.0 1670.7,155.0 1680.4,155.0 1690.2,155.0 1699.9,155.0 1709.7,155.0 1719.4,155.0 1729.2,155.0 1738.9,155.0 1748.7,155.0 1758.4,155.0 1768.2,155.0 1777.9,155.0 1787.7,155.0 1797.4,155.0" fill="none" stroke="#EF843C" stroke-width="1.0" stroke-linejoin="round"/><polygon points="1280.0,154.6 1290.4,154.6 1300.2,152.7 1309.9,150.0 1319.7,152.7 1329.4,154.5 1339.2,154.6 1348.9,154.6 1358.7,154.6 1368.4,154.6 1378.2,154.6 1387.9,154.6 1397.7,154.6 1407.4,154.6 1417.2,154.6 1426.9,154.6 1436.7,154.6 1446.4,154.6 1456.2,154.6 1465.9,154.6 1475.7,154.6 1485.4,154.6 1495.2,154.6 1504.9,154.6 1514.7,154.6 1524.4,154.6 1534.2,154.6 1543.9,154.6 1553.7,154.6 1563.4,154.6 1573.2,154.6 1582.9,154.6 1592.7,154.6 1602.4,154.6 1612.2,154.6 1621.9,154.6 1631.7,154.6 1641.4,154.6 1651.2,154.6 1660.9,154.6 1670.7,154.6 1680.4,154.6 1690.2,154.6 1699.9,154.6 1709.7,154.6 1719.4,154.6 1729.2,154.6 1738.9,154.6 1748.7,154.6 1758.4,154.6 1768.2,154.6 1777.9,154.6 1787.7,154.6 1797.4,154.6 1797.4,155.0 1787.7,155.0 1777.9,155.0 1768.2,155.0 1758.4,155.0 1748.7,155.0 1738.9,155.0 1729.2,155.0 1719.4,155.0 1709.7,155.0 1699.9,155.0 1690.2,155.0 1680.4,155.0 1670.7,155.0 1660.9,155.0 1651.2,155.0 1641.4,155.0 1631.7,155.0 1621.9,155.0 1612.2,155.0 1602.4,155.0 1592.7,155.0 1582.9,155.0 1573.2,155.0 1563.4,155.0 1553.7,155.0 1543.9,155.0 1534.2,155.0 1524.4,155.0 1514.7,155.0 1504.9,155.0 1495.2,155.0 1485.4,155.0 1475.7,155.0 1465.9,155.0 1456.2,155.0 1446.4,155.0 1436.7,155.0 1426.9,155.0 1417.2,155.0 1407.4,155.0 1397.7,155.0 1387.9,155.0 1378.2,155.0 1368.4,155.0 1358.7,155.0 1348.9,155.0 1339.2,155.0 1329.4,155.0 1319.7,155.0 1309.9,155.0 1300.2,155.0 1290.4,155.0 1280.0,155.0" fill="#E24D42" fill-opacity="0.1"/><polyline points="1280.0,154.6 1290.4,154.6 1300.2,152.7 1309.9,150.0 1319.7,152.7 1329.4,154.5 1339.2,154.6 1348.9,154.6 1358.7,154.6 1368.4,154.6 1378.2,154.6 1387.9,154.6 1397.7,154.6 1407.4,154.6 1417.2,154.6 1426.9,154.6 1436.7,154.6 1446.4,154.6 1456.2,154.6 1465.9,154.6 1475.7,154.6 1485.4,154.6 1495.2,154.6 1504.9,154.6 1514.7,154.6 1524.4,154.6 1534.2,154.6 1543.9,154.6 1553.7,154.6 1563.4,154.6 1573.2,154.6 1582.9,154.6 1592.7,154.6 1602.4,154.6 1612.2,154.6 1621.9,154.6 1631.7,154.6 1641.4,154.6 1651.2,154.6 1660.9,154.6 1670.7,154.6 1680.4,154.6 1690.2,154.6 1699.9,154.6 1709.7,154.6 1719.4,154.6 1729.2,154.6 1738.9,154.6 1748.7,154.6 1758.4,154.6 1768.2,154.6 1777.9,154.6 1787.7,154.6 1797.4,154.6" fill="none" stroke="#E24D42" stroke-width="1.0" stroke-linejoin="round"/><polygon points="1280.0,154.9 1290.4,154.9 1300.2,154.9 1309.9,154.9 1319.7,154.9 1329.4,154.9 1339.2,154.9 1348.9,154.9 1358.7,154.9 1368.4,154.9 1378.2,154.9 1387.9,154.9 1397.7,154.9 1407.4,154.9 1417.2,154.9 1426.9,154.9 1436.7,154.9 1446.4,154.9 1456.2,154.9 1465.9,154.9 1475.7,154.9 1485.4,154.9 1495.2,154.9 1504.9,154.9 1514.7,154.9 1524.4,154.9 1534.2,154.9 1543.9,154.9 1553.7,154.9 1563.4,154.9 1573.2,154.9 1582.9,154.9 1592.7,154.9 1602.4,154.9 1612.2,154.9 1621.9,154.9 1631.7,154.9 1641.4,154.9 1651.2,154.9 1660.9,154.9 1670.7,154.9 1680.4,154.9 1690.2,154.9 1699.9,154.9 1709.7,154.9 1719.4,154.9 1729.2,154.9 1738.9,154.9 1748.7,154.9 1758.4,154.9 1768.2,154.9 1777.9,154.9 1787.7,154.9 1797.4,154.9 1797.4,155.0 1787.7,155.0 1777.9,155.0 1768.2,155.0 1758.4,155.0 1748.7,155.0 1738.9,155.0 1729.2,155.0 1719.4,155.0 1709.7,155.0 1699.9,155.0 1690.2,155.0 1680.4,155.0 1670.7,155.0 1660.9,155.0 1651.2,155.0 1641.4,155.0 1631.7,155.0 1621.9,155.0 1612.2,155.0 1602.4,155.0 1592.7,155.0 1582.9,155.0 1573.2,155.0 1563.4,155.0 1553.7,155.0 1543.9,155.0 1534.2,155.0 1524.4,155.0 1514.7,155.0 1504.9,155.0 1495.2,155.0 1485.4,155.0 1475.7,155.0 1465.9,155.0 1456.2,155.0 1446.4,155.0 1436.7,155.0 1426.9,155.0 1417.2,155.0 1407.4,155.0 1397.7,155.0 1387.9,155.0 1378.2,155.0 1368.4,155.0 1358.7,155.0 1348.9,155.0 1339.2,155.0 1329.4,155.0 1319.7,155.0 1309.9,155.0 1300.2,155.0 1290.4,155.0 1280.0,155.0" fill="#1F78C1" fill-opacity="0.1"/><polyline points="1280.0,154.9 1290.4,154.9 1300.2,154.9 1309.9,154.9 1319.7,154.9 1329.4,154.9 1339.2,154.9 1348.9,154.9 1358.7,154.9 1368.4,154.9 1378.2,154.9 1387.9,154.9 1397.7,154.9 1407.4,154.9 1417.2,154.9 1426.9,154.9 1436.7,154.9 1446.4,154.9 1456.2,154.9 1465.9,154.9 1475.7,154.9 1485.4,154.9 1495.2,154.9 1504.9,154.9 1514.7,154.9 1524.4,154.9 1534.2,154.9 1543.9,154.9 1553.7,154.9 1563.4,154.9 1573.2,154.9 1582.9,154.9 1592.7,154.9 1602.4,154.9 1612.2,154.9 1621.9,154.9 1631.7,154.9 1641.4,154.9 1651.2,154.9 1660.9,154.9 1670.7,154.9 1680.4,154.9 1690.2,154.9 1699.9,154.9 1709.7,154.9 1719.4,154.9 1729.2,154.9 1738.9,154.9 1748.7,154.9 1758.4,154.9 1768.2,154.9 1777.9,154.9 1787.7,154.9 1797.4,154.9" fill="none" stroke="#1F78C1" stroke-width="1.0" stroke-linejoin="round"/><polygon points="1280.0,70.6 1290.4,71.4 1300.2,74.6 1309.9,71.1 1319.7,72.1 1329.4,71.1 1339.2,71.2 1348.9,71.0 1358.7,70.8 1368.4,71.4 1378.2,71.4 1387.9,71.1 1397.7,71.7 1407.4,71.3 1417.2,68.4 1426.9,70.1 1436.7,71.4 1446.4,71.7 1456.2,71.4 1465.9,72.8 1475.7,71.1 1485.4,72.1 1495.2,71.3 1504.9,73.6 1514.7,70.8 1524.4,70.9 1534.2,72.2 1543.9,72.2 1553.7,69.8 1563.4,73.6 1573.2,77.8 1582.9,87.1 1592.7,74.9 1602.4,69.4 1612.2,69.9 1621.9,71.4 1631.7,72.0 1641.4,69.7 1651.2,70.5 1660.9,71.6 1670.7,73.5 1680.4,72.0 1690.2,71.5 1699.9,73.5 1709.7,71.6 1719.4,72.8 1729.2,72.6 1738.9,70.8 1748.7,78.3 1758.4,93.4 1768.2,77.6 1777.9,78.5 1787.7,73.5 1797.4,70.0 1797.4,155.0 1787.7,155.0 1777.9,155.0 1768.2,155.0 1758.4,155.0 1748.7,155.0 1738.9,155.0 1729.2,155.0 1719.4,155.0 1709.7,155.0 1699.9,155.0 1690.2,155.0 1680.4,155.0 1670.7,155.0 1660.9,155.0 1651.2,155.0 1641.4,155.0 1631.7,155.0 1621.9,155.0 1612.2,155.0 1602.4,155.0 1592.7,155.0 1582.9,155.0 1573.2,155.0 1563.4,155.0 1553.7,155.0 1543.9,155.0 1534.2,155.0 1524.4,155.0 1514.7,155.0 1504.9,155.0 1495.2,155.0 1485.4,155.0 1475.7,155.0 1465.9,155.0 1456.2,155.0 1446.4,155.0 1436.7,155.0 1426.9,155.0 1417.2,155.0 1407.4,155.0 1397.7,155.0 1387.9,155.0 1378.2,155.0 1368.4,155.0 1358.7,155.0 1348.9,155.0 1339.2,155.0 1329.4,155.0 1319.7,155.0 1309.9,155.0 1300.2,155.0 1290.4,155.0 1280.0,155.0" fill="#BA43A9" fill-opacity="0.1"/><polyline points="1280.0,70.6 1290.4,71.4 1300.2,74.6 1309.9,71.1 1319.7,72.1 1329.4,71.1 1339.2,71.2 1348.9,71.0 1358.7,70.8 1368.4,71.4 1378.2,71.4 1387.9,71.1 1397.7,71.7 1407.4,71.3 1417.2,68.4 1426.9,70.1 1436.7,71.4 1446.4,71.7 1456.2,71.4 1465.9,72.8 1475.7,71.1 1485.4,72.1 1495.2,71.3 1504.9,73.6 1514.7,70.8 1524.4,70.9 1534.2,72.2 1543.9,72.2 1553.7,69.8 1563.4,73.6 1573.2,77.8 1582.9,87.1 1592.7,74.9 1602.4,69.4 1612.2,69.9 1621.9,71.4 1631.7,72.0 1641.4,69.7 1651.2,70.5 1660.9,71.6 1670.7,73.5 1680.4,72.0 1690.2,71.5 1699.9,73.5 1709.7,71.6 1719.4,72.8 1729.2,72.6 1738.9,70.8 1748.7,78.3 1758.4,93.4 1768.2,77.6 1777.9,78.5 1787.7,73.5 1797.4,70.0" fill="none" stroke="#BA43A9" stroke-width="1.0" stroke-linejoin="round"/><polyline points="1280.0,154.9 1290.4,154.9 1300.2,154.9 1309.9,154.9 1319.7,154.9 1329.4,154.9 1339.2,154.9 1348.9,154.9 1358.7,154.9 1368.4,154.9 1378.2,154.9 1387.9,154.9 1397.7,154.9 1407.4,154.9 1417.2,154.9 1426.9,154.9 1436.7,154.9 1446.4,154.9 1456.2,154.9 1465.9,154.9 1475.7,154.9 1485.4,154.9 1495.2,154.9 1504.9,154.9 1514.7,154.9 1524.4,154.9 1534.2,154.9 1543.9,154.9 1553.7,154.9 1563.4,154.9 1573.2,154.9 1582.9,154.9 1592.7,154.9 1602.4,154.9 1612.2,154.9 1621.9,154.9 1631.7,154.9 1641.4,154.9 1651.2,154.9 1660.9,154.9 1670.7,154.9 1680.4,154.9 1690.2,154.9 1699.9,154.9 1709.7,154.9 1719.4,154.9 1729.2,154.9 1738.9,154.9 1748.7,154.9 1758.4,154.9 1768.2,154.9 1777.9,154.9 1787.7,154.9 1797.4,154.9" fill="none" stroke="#8483bd" stroke-width="1.9" stroke-linejoin="round"/></g>
<text x="1239.89" y="58.60" font-size="12" fill="#c4c5d2" textLength="34.51" lengthAdjust="spacingAndGlyphs">1000%</text>
<text x="1246.38" y="83.70" font-size="12" fill="#c4c5d2" textLength="28.02" lengthAdjust="spacingAndGlyphs">750%</text>
<text x="1246.38" y="108.80" font-size="12" fill="#c4c5d2" textLength="28.02" lengthAdjust="spacingAndGlyphs">500%</text>
<text x="1246.38" y="134.00" font-size="12" fill="#c4c5d2" textLength="28.02" lengthAdjust="spacingAndGlyphs">250%</text>
<text x="1259.40" y="159.10" font-size="12" fill="#c4c5d2" textLength="15.00" lengthAdjust="spacingAndGlyphs">0%</text>
<text x="1324.28" y="174.00" font-size="12" fill="#c4c5d2" textLength="28.84" lengthAdjust="spacingAndGlyphs">17:48</text>
<text x="1441.28" y="174.00" font-size="12" fill="#c4c5d2" textLength="28.84" lengthAdjust="spacingAndGlyphs">17:50</text>
<text x="1558.28" y="174.00" font-size="12" fill="#c4c5d2" textLength="28.84" lengthAdjust="spacingAndGlyphs">17:52</text>
<text x="1675.28" y="174.00" font-size="12" fill="#c4c5d2" textLength="28.84" lengthAdjust="spacingAndGlyphs">17:54</text>
<text x="1792.28" y="174.00" font-size="12" fill="#c4c5d2" textLength="28.84" lengthAdjust="spacingAndGlyphs">17:56</text>
<rect x="1248.1" y="195.1" width="14" height="4" rx="1" fill="#7EB26D"/>
<text x="1276.10" y="199.40" font-size="12" fill="#ccccdc" textLength="75.20" lengthAdjust="spacingAndGlyphs">cpu.object_se</text>
<text x="1363.70" y="199.40" font-size="12" fill="#ccccdc" textLength="55.65" lengthAdjust="spacingAndGlyphs">Min: 217%</text>
<text x="1426.15" y="199.40" font-size="12" fill="#ccccdc" textLength="55.64" lengthAdjust="spacingAndGlyphs">Avg: 307%</text>
<rect x="1492.5" y="195.1" width="14" height="4" rx="1" fill="#EAB839"/>
<text x="1520.49" y="199.40" font-size="12" fill="#ccccdc" textLength="75.80" lengthAdjust="spacingAndGlyphs">cpu.object_au</text>
<text x="1608.69" y="199.40" font-size="12" fill="#ccccdc" textLength="58.85" lengthAdjust="spacingAndGlyphs">Min: 3.79%</text>
<text x="1674.34" y="199.40" font-size="12" fill="#ccccdc" textLength="58.83" lengthAdjust="spacingAndGlyphs">Avg: 4.09%</text>
<rect x="1248.1" y="216.1" width="14" height="4" rx="1" fill="#6ED0E0"/>
<text x="1276.10" y="220.40" font-size="12" fill="#ccccdc" textLength="72.92" lengthAdjust="spacingAndGlyphs">cpu.object_re</text>
<text x="1361.42" y="220.40" font-size="12" fill="#ccccdc" textLength="72.51" lengthAdjust="spacingAndGlyphs">Min: 0.0963%</text>
<text x="1440.73" y="220.40" font-size="12" fill="#ccccdc" textLength="58.83" lengthAdjust="spacingAndGlyphs">Avg: 5.24%</text>
<rect x="1510.3" y="216.1" width="14" height="4" rx="1" fill="#EF843C"/>
<text x="1538.26" y="220.40" font-size="12" fill="#ccccdc" textLength="76.01" lengthAdjust="spacingAndGlyphs">cpu.object_up</text>
<text x="1626.68" y="220.40" font-size="12" fill="#ccccdc" textLength="41.98" lengthAdjust="spacingAndGlyphs">Min: 0%</text>
<text x="1675.45" y="220.40" font-size="12" fill="#ccccdc" textLength="72.51" lengthAdjust="spacingAndGlyphs">Avg: 0.0919%</text>
<rect x="1248.1" y="237.1" width="14" height="4" rx="1" fill="#E24D42"/>
<text x="1276.10" y="241.40" font-size="12" fill="#ccccdc" textLength="92.68" lengthAdjust="spacingAndGlyphs">cpu.container_se</text>
<text x="1381.18" y="241.40" font-size="12" fill="#ccccdc" textLength="65.69" lengthAdjust="spacingAndGlyphs">Min: 0.938%</text>
<text x="1453.67" y="241.40" font-size="12" fill="#ccccdc" textLength="58.83" lengthAdjust="spacingAndGlyphs">Avg: 4.08%</text>
<rect x="1523.2" y="237.1" width="14" height="4" rx="1" fill="#1F78C1"/>
<text x="1551.20" y="241.40" font-size="12" fill="#ccccdc" textLength="85.47" lengthAdjust="spacingAndGlyphs">cpu.account_se</text>
<text x="1649.07" y="241.40" font-size="12" fill="#ccccdc" textLength="65.69" lengthAdjust="spacingAndGlyphs">Min: 0.845%</text>
<text x="1721.56" y="241.40" font-size="12" fill="#ccccdc" textLength="58.83" lengthAdjust="spacingAndGlyphs">Avg: 1.12%</text></g>
<g id="p4"><rect x="3.5" y="269.5" width="604" height="257" rx="2.5" fill="#181b1f" stroke="#25272c"/>
<text x="182.86" y="290.50" font-size="14" fill="#ccccdc" textLength="245.88" lengthAdjust="spacingAndGlyphs" stroke="#ccccdc" stroke-width="0.35">GET &amp; HEAD Account/Container/Object</text>
<rect x="39.0" y="320" width="544.0" height="1" fill="rgba(200,200,200,0.22)"/>
<rect x="39.0" y="346" width="544.0" height="1" fill="rgba(200,200,200,0.22)"/>
<rect x="39.0" y="373" width="544.0" height="1" fill="rgba(200,200,200,0.22)"/>
<rect x="39.0" y="399" width="544.0" height="1" fill="rgba(200,200,200,0.22)"/>
<rect x="39.0" y="425" width="544.0" height="1" fill="rgba(200,200,200,0.22)"/>
<rect x="98" y="320" width="1" height="106" fill="rgba(200,200,200,0.22)"/>
<rect x="219" y="320" width="1" height="106" fill="rgba(200,200,200,0.22)"/>
<rect x="339" y="320" width="1" height="106" fill="rgba(200,200,200,0.22)"/>
<rect x="460" y="320" width="1" height="106" fill="rgba(200,200,200,0.22)"/>
<rect x="580" y="320" width="1" height="106" fill="rgba(200,200,200,0.22)"/>
<g clip-path="url(#c3)"><polygon points="39.0,425.5 49.0,425.5 59.0,425.5 69.1,425.5 79.1,425.5 89.2,425.5 99.2,425.5 109.2,425.5 119.3,425.5 129.3,425.5 139.4,425.5 149.4,425.5 159.5,425.5 169.5,425.5 179.5,425.5 189.6,425.5 199.6,425.5 209.7,425.5 219.7,425.5 229.7,425.5 239.8,425.5 249.8,425.5 259.9,425.5 269.9,425.5 280.0,425.5 290.0,425.5 300.0,425.5 310.1,425.5 320.1,425.5 330.2,425.5 340.2,425.5 350.2,425.5 360.3,425.5 370.3,425.5 380.4,425.5 390.4,425.5 400.5,425.5 410.5,425.5 420.5,425.5 430.6,425.5 440.6,425.5 450.7,425.5 460.7,425.5 470.7,425.5 480.8,425.5 490.8,425.5 500.9,425.5 510.9,425.5 521.0,425.5 531.0,425.5 541.0,425.5 551.1,425.5 561.1,425.5 571.2,425.5 571.2,425.5 561.1,425.5 551.1,425.5 541.0,425.5 531.0,425.5 521.0,425.5 510.9,425.5 500.9,425.5 490.8,425.5 480.8,425.5 470.7,425.5 460.7,425.5 450.7,425.5 440.6,425.5 430.6,425.5 420.5,425.5 410.5,425.5 400.5,425.5 390.4,425.5 380.4,425.5 370.3,425.5 360.3,425.5 350.2,425.5 340.2,425.5 330.2,425.5 320.1,425.5 310.1,425.5 300.0,425.5 290.0,425.5 280.0,425.5 269.9,425.5 259.9,425.5 249.8,425.5 239.8,425.5 229.7,425.5 219.7,425.5 209.7,425.5 199.6,425.5 189.6,425.5 179.5,425.5 169.5,425.5 159.5,425.5 149.4,425.5 139.4,425.5 129.3,425.5 119.3,425.5 109.2,425.5 99.2,425.5 89.2,425.5 79.1,425.5 69.1,425.5 59.0,425.5 49.0,425.5 39.0,425.5" fill="#7EB26D" fill-opacity="0.1"/><polyline points="39.0,425.5 49.0,425.5 59.0,425.5 69.1,425.5 79.1,425.5 89.2,425.5 99.2,425.5 109.2,425.5 119.3,425.5 129.3,425.5 139.4,425.5 149.4,425.5 159.5,425.5 169.5,425.5 179.5,425.5 189.6,425.5 199.6,425.5 209.7,425.5 219.7,425.5 229.7,425.5 239.8,425.5 249.8,425.5 259.9,425.5 269.9,425.5 280.0,425.5 290.0,425.5 300.0,425.5 310.1,425.5 320.1,425.5 330.2,425.5 340.2,425.5 350.2,425.5 360.3,425.5 370.3,425.5 380.4,425.5 390.4,425.5 400.5,425.5 410.5,425.5 420.5,425.5 430.6,425.5 440.6,425.5 450.7,425.5 460.7,425.5 470.7,425.5 480.8,425.5 490.8,425.5 500.9,425.5 510.9,425.5 521.0,425.5 531.0,425.5 541.0,425.5 551.1,425.5 561.1,425.5 571.2,425.5" fill="none" stroke="#7EB26D" stroke-width="1.0" stroke-linejoin="round"/><polygon points="39.0,425.5 49.0,425.5 59.0,425.5 69.1,425.5 79.1,425.5 89.2,425.5 99.2,425.5 109.2,425.5 119.3,425.5 129.3,425.5 139.4,425.5 149.4,425.5 159.5,425.5 169.5,425.5 179.5,425.5 189.6,425.5 199.6,425.5 209.7,425.5 219.7,425.5 229.7,425.5 239.8,425.5 249.8,425.5 259.9,425.5 269.9,425.5 280.0,425.5 290.0,425.5 300.0,425.5 310.1,425.5 320.1,425.5 330.2,425.5 340.2,425.5 350.2,425.5 360.3,425.5 370.3,425.5 380.4,425.5 390.4,425.5 400.5,425.5 410.5,425.5 420.5,425.5 430.6,425.5 440.6,425.5 450.7,425.5 460.7,425.5 470.7,425.5 480.8,425.5 490.8,425.5 500.9,425.5 510.9,425.5 521.0,425.5 531.0,425.5 541.0,425.5 551.1,425.5 561.1,425.5 571.2,425.5 571.2,425.5 561.1,425.5 551.1,425.5 541.0,425.5 531.0,425.5 521.0,425.5 510.9,425.5 500.9,425.5 490.8,425.5 480.8,425.5 470.7,425.5 460.7,425.5 450.7,425.5 440.6,425.5 430.6,425.5 420.5,425.5 410.5,425.5 400.5,425.5 390.4,425.5 380.4,425.5 370.3,425.5 360.3,425.5 350.2,425.5 340.2,425.5 330.2,425.5 320.1,425.5 310.1,425.5 300.0,425.5 290.0,425.5 280.0,425.5 269.9,425.5 259.9,425.5 249.8,425.5 239.8,425.5 229.7,425.5 219.7,425.5 209.7,425.5 199.6,425.5 189.6,425.5 179.5,425.5 169.5,425.5 159.5,425.5 149.4,425.5 139.4,425.5 129.3,425.5 119.3,425.5 109.2,425.5 99.2,425.5 89.2,425.5 79.1,425.5 69.1,425.5 59.0,425.5 49.0,425.5 39.0,425.5" fill="#EAB839" fill-opacity="0.1"/><polyline points="39.0,425.5 49.0,425.5 59.0,425.5 69.1,425.5 79.1,425.5 89.2,425.5 99.2,425.5 109.2,425.5 119.3,425.5 129.3,425.5 139.4,425.5 149.4,425.5 159.5,425.5 169.5,425.5 179.5,425.5 189.6,425.5 199.6,425.5 209.7,425.5 219.7,425.5 229.7,425.5 239.8,425.5 249.8,425.5 259.9,425.5 269.9,425.5 280.0,425.5 290.0,425.5 300.0,425.5 310.1,425.5 320.1,425.5 330.2,425.5 340.2,425.5 350.2,425.5 360.3,425.5 370.3,425.5 380.4,425.5 390.4,425.5 400.5,425.5 410.5,425.5 420.5,425.5 430.6,425.5 440.6,425.5 450.7,425.5 460.7,425.5 470.7,425.5 480.8,425.5 490.8,425.5 500.9,425.5 510.9,425.5 521.0,425.5 531.0,425.5 541.0,425.5 551.1,425.5 561.1,425.5 571.2,425.5" fill="none" stroke="#EAB839" stroke-width="1.5" stroke-linejoin="round"/><polygon points="39.0,335.1 49.0,336.4 59.0,340.7 69.1,335.6 79.1,338.4 89.2,337.4 99.2,336.7 109.2,336.7 119.3,336.4 129.3,334.6 139.4,336.6 149.4,337.6 159.5,337.1 169.5,335.6 179.5,334.6 189.6,334.4 199.6,335.6 209.7,337.4 219.7,337.6 229.7,337.1 239.8,336.5 249.8,337.2 259.9,335.8 269.9,338.6 280.0,336.3 290.0,337.3 300.0,336.1 310.1,335.8 320.1,335.1 330.2,338.1 340.2,340.5 350.2,358.0 360.3,340.7 370.3,335.4 380.4,334.3 390.4,337.4 400.5,336.4 410.5,335.2 420.5,336.1 430.6,337.1 440.6,339.6 450.7,338.6 460.7,337.8 470.7,336.8 480.8,338.4 490.8,338.1 500.9,336.8 510.9,335.6 521.0,345.3 531.0,366.1 541.0,344.3 551.1,344.7 561.1,339.2 571.2,335.1 571.2,425.5 561.1,425.5 551.1,425.5 541.0,425.5 531.0,425.5 521.0,425.5 510.9,425.5 500.9,425.5 490.8,425.5 480.8,425.5 470.7,425.5 460.7,425.5 450.7,425.5 440.6,425.5 430.6,425.5 420.5,425.5 410.5,425.5 400.5,425.5 390.4,425.5 380.4,425.5 370.3,425.5 360.3,425.5 350.2,425.5 340.2,425.5 330.2,425.5 320.1,425.5 310.1,425.5 300.0,425.5 290.0,425.5 280.0,425.5 269.9,425.5 259.9,425.5 249.8,425.5 239.8,425.5 229.7,425.5 219.7,425.5 209.7,425.5 199.6,425.5 189.6,425.5 179.5,425.5 169.5,425.5 159.5,425.5 149.4,425.5 139.4,425.5 129.3,425.5 119.3,425.5 109.2,425.5 99.2,425.5 89.2,425.5 79.1,425.5 69.1,425.5 59.0,425.5 49.0,425.5 39.0,425.5" fill="#6ED0E0" fill-opacity="0.1"/><polyline points="39.0,335.1 49.0,336.4 59.0,340.7 69.1,335.6 79.1,338.4 89.2,337.4 99.2,336.7 109.2,336.7 119.3,336.4 129.3,334.6 139.4,336.6 149.4,337.6 159.5,337.1 169.5,335.6 179.5,334.6 189.6,334.4 199.6,335.6 209.7,337.4 219.7,337.6 229.7,337.1 239.8,336.5 249.8,337.2 259.9,335.8 269.9,338.6 280.0,336.3 290.0,337.3 300.0,336.1 310.1,335.8 320.1,335.1 330.2,338.1 340.2,340.5 350.2,358.0 360.3,340.7 370.3,335.4 380.4,334.3 390.4,337.4 400.5,336.4 410.5,335.2 420.5,336.1 430.6,337.1 440.6,339.6 450.7,338.6 460.7,337.8 470.7,336.8 480.8,338.4 490.8,338.1 500.9,336.8 510.9,335.6 521.0,345.3 531.0,366.1 541.0,344.3 551.1,344.7 561.1,339.2 571.2,335.1" fill="none" stroke="#6ED0E0" stroke-width="1.0" stroke-linejoin="round"/></g>
<text x="16.35" y="324.60" font-size="12" fill="#c4c5d2" textLength="16.65" lengthAdjust="spacingAndGlyphs">1 K</text>
<text x="13.47" y="350.85" font-size="12" fill="#c4c5d2" textLength="19.53" lengthAdjust="spacingAndGlyphs">750</text>
<text x="13.47" y="377.10" font-size="12" fill="#c4c5d2" textLength="19.53" lengthAdjust="spacingAndGlyphs">500</text>
<text x="13.47" y="403.35" font-size="12" fill="#c4c5d2" textLength="19.53" lengthAdjust="spacingAndGlyphs">250</text>
<text x="26.49" y="429.60" font-size="12" fill="#c4c5d2" textLength="6.51" lengthAdjust="spacingAndGlyphs">0</text>
<text x="84.28" y="444.50" font-size="12" fill="#c4c5d2" textLength="28.84" lengthAdjust="spacingAndGlyphs">17:48</text>
<text x="204.78" y="444.50" font-size="12" fill="#c4c5d2" textLength="28.84" lengthAdjust="spacingAndGlyphs">17:50</text>
<text x="325.28" y="444.50" font-size="12" fill="#c4c5d2" textLength="28.84" lengthAdjust="spacingAndGlyphs">17:52</text>
<text x="445.78" y="444.50" font-size="12" fill="#c4c5d2" textLength="28.84" lengthAdjust="spacingAndGlyphs">17:54</text>
<text x="566.28" y="444.50" font-size="12" fill="#c4c5d2" textLength="28.84" lengthAdjust="spacingAndGlyphs">17:56</text>
<rect x="22.1" y="465.1" width="14" height="4" rx="1" fill="#7EB26D"/>
<text x="50.10" y="469.40" font-size="12" fill="#ccccdc" textLength="73.73" lengthAdjust="spacingAndGlyphs">head account</text>
<text x="136.23" y="469.40" font-size="12" fill="#ccccdc" textLength="52.93" lengthAdjust="spacingAndGlyphs">Max: 1.10</text>
<text x="195.96" y="469.40" font-size="12" fill="#ccccdc" textLength="56.78" lengthAdjust="spacingAndGlyphs">Avg: 0.248</text>
<text x="259.54" y="469.40" font-size="12" fill="#ccccdc" textLength="56.81" lengthAdjust="spacingAndGlyphs">Total: 13.4</text>
<rect x="22.1" y="486.1" width="14" height="4" rx="1" fill="#EAB839"/>
<text x="50.10" y="490.40" font-size="12" fill="#ccccdc" textLength="80.95" lengthAdjust="spacingAndGlyphs">head container</text>
<text x="143.45" y="490.40" font-size="12" fill="#ccccdc" textLength="59.75" lengthAdjust="spacingAndGlyphs">Max: 0.300</text>
<text x="210.00" y="490.40" font-size="12" fill="#ccccdc" textLength="63.60" lengthAdjust="spacingAndGlyphs">Avg: 0.0241</text>
<text x="280.40" y="490.40" font-size="12" fill="#ccccdc" textLength="56.81" lengthAdjust="spacingAndGlyphs">Total: 1.30</text>
<rect x="22.1" y="507.1" width="14" height="4" rx="1" fill="#6ED0E0"/>
<text x="50.10" y="511.40" font-size="12" fill="#ccccdc" textLength="54.04" lengthAdjust="spacingAndGlyphs">get object</text>
<text x="116.54" y="511.40" font-size="12" fill="#ccccdc" textLength="49.72" lengthAdjust="spacingAndGlyphs">Max: 863</text>
<text x="173.05" y="511.40" font-size="12" fill="#ccccdc" textLength="46.72" lengthAdjust="spacingAndGlyphs">Avg: 826</text>
<text x="226.58" y="511.40" font-size="12" fill="#ccccdc" textLength="67.46" lengthAdjust="spacingAndGlyphs">Total: 44.6 K</text></g>
<g id="p5"><rect x="616.5" y="269.5" width="604" height="257" rx="2.5" fill="#181b1f" stroke="#25272c"/>
<text x="854.80" y="290.50" font-size="14" fill="#ccccdc" textLength="128.00" lengthAdjust="spacingAndGlyphs" stroke="#ccccdc" stroke-width="0.35">Per Disk Throughput</text>
<rect x="672.2" y="320" width="523.8" height="1" fill="rgba(200,200,200,0.22)"/>
<rect x="672.2" y="345" width="523.8" height="1" fill="rgba(200,200,200,0.22)"/>
<rect x="672.2" y="370" width="523.8" height="1" fill="rgba(200,200,200,0.22)"/>
<rect x="672.2" y="396" width="523.8" height="1" fill="rgba(200,200,200,0.22)"/>
<rect x="672.2" y="421" width="523.8" height="1" fill="rgba(200,200,200,0.22)"/>
<rect x="729" y="320" width="1" height="102" fill="rgba(200,200,200,0.22)"/>
<rect x="845" y="320" width="1" height="102" fill="rgba(200,200,200,0.22)"/>
<rect x="961" y="320" width="1" height="102" fill="rgba(200,200,200,0.22)"/>
<rect x="1077" y="320" width="1" height="102" fill="rgba(200,200,200,0.22)"/>
<rect x="1193" y="320" width="1" height="102" fill="rgba(200,200,200,0.22)"/>
<g clip-path="url(#c4)"><polygon points="671.9,347.2 681.6,348.3 691.3,351.8 701.0,347.6 710.6,349.9 720.3,349.1 730.0,348.5 739.7,348.5 749.3,348.3 759.0,346.8 768.7,348.5 778.4,349.3 788.0,348.9 797.7,347.6 807.4,346.8 817.1,346.7 826.7,347.6 836.4,349.1 846.1,349.3 855.8,348.9 865.4,348.4 875.1,348.9 884.8,347.8 894.5,350.1 904.1,348.2 913.8,349.0 923.5,348.0 933.2,347.8 942.8,347.2 952.5,349.7 962.2,351.7 971.9,366.0 981.5,351.8 991.2,347.5 1000.9,346.6 1010.6,349.1 1020.2,348.3 1029.9,347.3 1039.6,348.0 1049.3,348.9 1058.9,350.9 1068.6,350.1 1078.3,349.4 1088.0,348.6 1097.6,349.9 1107.3,349.7 1117.0,348.6 1126.7,347.6 1136.3,355.6 1146.0,372.6 1155.7,354.8 1165.4,355.1 1175.0,350.6 1184.7,347.2 1184.7,421.3 1175.0,421.3 1165.4,421.3 1155.7,421.3 1146.0,421.3 1136.3,421.3 1126.7,421.3 1117.0,421.3 1107.3,421.3 1097.6,421.3 1088.0,421.3 1078.3,421.3 1068.6,421.3 1058.9,421.3 1049.3,421.3 1039.6,421.3 1029.9,421.3 1020.2,421.3 1010.6,421.3 1000.9,421.3 991.2,421.3 981.5,421.3 971.9,421.3 962.2,421.3 952.5,421.3 942.8,421.3 933.2,421.3 923.5,421.3 913.8,421.3 904.1,421.3 894.5,421.3 884.8,421.3 875.1,421.3 865.4,421.3 855.8,421.3 846.1,421.3 836.4,421.3 826.7,421.3 817.1,421.3 807.4,421.3 797.7,421.3 788.0,421.3 778.4,421.3 768.7,421.3 759.0,421.3 749.3,421.3 739.7,421.3 730.0,421.3 720.3,421.3 710.6,421.3 701.0,421.3 691.3,421.3 681.6,421.3 671.9,421.3" fill="#5e3e33"/><polygon points="671.9,407.2 681.6,374.3 691.3,418.3 701.0,417.1 710.6,410.7 720.3,418.6 730.0,418.3 739.7,410.7 749.3,418.3 759.0,417.8 768.7,410.7 778.4,416.0 788.0,417.8 797.7,415.6 807.4,412.2 817.1,417.8 826.7,410.2 836.4,416.8 846.1,417.8 855.8,417.5 865.4,408.7 875.1,417.8 884.8,419.4 894.5,410.7 904.1,419.8 913.8,418.3 923.5,410.7 933.2,417.8 942.8,418.3 952.5,409.4 962.2,419.4 971.9,420.9 981.5,417.4 991.2,420.1 1000.9,419.4 1010.6,414.5 1020.2,419.4 1029.9,419.8 1039.6,414.0 1049.3,419.4 1058.9,419.8 1068.6,413.7 1078.3,418.9 1088.0,418.9 1097.6,412.8 1107.3,419.4 1117.0,419.4 1126.7,413.3 1136.3,419.4 1146.0,420.1 1155.7,414.5 1165.4,419.8 1175.0,419.8 1184.7,416.3 1184.7,421.3 1175.0,421.3 1165.4,421.3 1155.7,421.3 1146.0,421.3 1136.3,421.3 1126.7,421.3 1117.0,421.3 1107.3,421.3 1097.6,421.3 1088.0,421.3 1078.3,421.3 1068.6,421.3 1058.9,421.3 1049.3,421.3 1039.6,421.3 1029.9,421.3 1020.2,421.3 1010.6,421.3 1000.9,421.3 991.2,421.3 981.5,421.3 971.9,421.3 962.2,421.3 952.5,421.3 942.8,421.3 933.2,421.3 923.5,421.3 913.8,421.3 904.1,421.3 894.5,421.3 884.8,421.3 875.1,421.3 865.4,421.3 855.8,421.3 846.1,421.3 836.4,421.3 826.7,421.3 817.1,421.3 807.4,421.3 797.7,421.3 788.0,421.3 778.4,421.3 768.7,421.3 759.0,421.3 749.3,421.3 739.7,421.3 730.0,421.3 720.3,421.3 710.6,421.3 701.0,421.3 691.3,421.3 681.6,421.3 671.9,421.3" fill="#785848"/><rect x="672.2" y="320" width="523.8" height="1" fill="rgba(220,200,180,0.10)"/><rect x="672.2" y="345" width="523.8" height="1" fill="rgba(220,200,180,0.10)"/><rect x="672.2" y="370" width="523.8" height="1" fill="rgba(220,200,180,0.10)"/><rect x="672.2" y="396" width="523.8" height="1" fill="rgba(220,200,180,0.10)"/><rect x="729" y="320" width="1" height="102" fill="rgba(220,200,180,0.10)"/><rect x="845" y="320" width="1" height="102" fill="rgba(220,200,180,0.10)"/><rect x="961" y="320" width="1" height="102" fill="rgba(220,200,180,0.10)"/><rect x="1077" y="320" width="1" height="102" fill="rgba(220,200,180,0.10)"/><rect x="1193" y="320" width="1" height="102" fill="rgba(220,200,180,0.10)"/><polyline points="671.9,417.3 681.6,418.3 691.3,413.3 701.0,416.3 710.6,419.1 720.3,417.5 730.0,416.3 739.7,417.3 749.3,419.0 759.0,418.9 768.7,417.2 778.4,416.3 788.0,417.6 797.7,419.2 807.4,418.7 817.1,416.9 826.7,416.4 836.4,418.0 846.1,419.3 855.8,418.4 865.4,416.7 875.1,416.6 884.8,418.3 894.5,419.3 904.1,418.1 913.8,416.5 923.5,416.8 933.2,418.6 942.8,419.2 952.5,417.8 962.2,416.3 971.9,420.3 981.5,410.2 991.2,416.5 1000.9,418.0 1010.6,418.5 1020.2,416.0 1029.9,407.5 1039.6,412.0 1049.3,416.5 1058.9,416.0 1068.6,417.5 1078.3,419.2 1088.0,418.7 1097.6,416.9 1107.3,418.0 1117.0,416.0 1126.7,419.0 1136.3,418.4 1146.0,417.0 1155.7,416.6 1165.4,418.0 1175.0,419.3 1184.7,418.1" fill="none" stroke="#8c8a52" stroke-width="0.9" stroke-linejoin="round"/><polyline points="671.9,346.2 681.6,348.9 691.3,352.2 701.0,347.6 710.6,349.0 720.3,350.0 730.0,349.5 739.7,348.6 749.3,348.3 759.0,346.0 768.7,346.9 778.4,348.9 788.0,349.1 797.7,346.3 807.4,347.8 817.1,345.8 826.7,346.8 836.4,347.6 846.1,350.9 855.8,349.6 865.4,349.6 875.1,349.3 884.8,346.3 894.5,349.5 904.1,348.2 913.8,347.8 923.5,349.5 933.2,347.4 942.8,346.1 952.5,350.7 962.2,350.5 971.9,367.4 981.5,351.7 991.2,347.6 1000.9,346.1 1010.6,349.1 1020.2,347.3 1029.9,345.8 1039.6,349.2 1049.3,348.0 1058.9,351.8 1068.6,349.2 1078.3,350.9 1088.0,349.9 1097.6,350.7 1107.3,350.5 1117.0,348.9 1126.7,348.4 1136.3,354.4 1146.0,372.6 1155.7,355.8 1165.4,354.1 1175.0,351.9 1184.7,348.5" fill="none" stroke="#EAB839" stroke-width="1.0" stroke-linejoin="round"/><polyline points="671.9,348.7 681.6,347.1 691.3,350.3 701.0,349.2 710.6,348.9 720.3,347.9 730.0,349.0 739.7,348.0 749.3,349.5 759.0,346.0 768.7,349.9 778.4,348.7 788.0,349.2 797.7,349.0 807.4,347.4 817.1,348.0 826.7,348.3 836.4,347.7 846.1,350.5 855.8,349.2 865.4,347.8 875.1,348.0 884.8,348.9 894.5,350.4 904.1,349.6 913.8,349.9 923.5,349.5 933.2,348.0 942.8,347.9 952.5,350.0 962.2,350.9 971.9,367.5 981.5,351.2 991.2,348.4 1000.9,348.0 1010.6,349.6 1020.2,347.1 1029.9,348.4 1039.6,348.6 1049.3,347.9 1058.9,349.5 1068.6,350.2 1078.3,347.9 1088.0,350.0 1097.6,350.0 1107.3,349.7 1117.0,348.3 1126.7,348.2 1136.3,356.9 1146.0,372.0 1155.7,354.4 1165.4,355.4 1175.0,349.9 1184.7,347.5" fill="none" stroke="#6ED0E0" stroke-width="1.0" stroke-linejoin="round"/><polyline points="671.9,348.6 681.6,349.7 691.3,353.1 701.0,346.3 710.6,350.2 720.3,348.9 730.0,348.6 739.7,347.4 749.3,347.3 759.0,346.6 768.7,347.6 778.4,349.1 788.0,347.3 797.7,346.3 807.4,347.5 817.1,346.4 826.7,347.7 836.4,349.9 846.1,348.8 855.8,347.5 865.4,349.3 875.1,349.2 884.8,348.3 894.5,350.5 904.1,349.7 913.8,348.6 923.5,348.9 933.2,347.4 942.8,347.5 952.5,350.2 962.2,351.1 971.9,364.7 981.5,351.7 991.2,348.2 1000.9,346.9 1010.6,348.9 1020.2,348.7 1029.9,346.3 1039.6,347.0 1049.3,348.3 1058.9,351.9 1068.6,349.1 1078.3,348.2 1088.0,347.3 1097.6,348.5 1107.3,349.0 1117.0,348.9 1126.7,348.7 1136.3,355.0 1146.0,372.2 1155.7,354.1 1165.4,354.5 1175.0,351.5 1184.7,347.4" fill="none" stroke="#EF843C" stroke-width="1.0" stroke-linejoin="round"/><polyline points="671.9,347.9 681.6,349.4 691.3,350.8 701.0,349.2 710.6,349.0 720.3,349.7 730.0,347.2 739.7,349.4 749.3,347.2 759.0,347.5 768.7,349.2 778.4,350.1 788.0,348.7 797.7,348.8 807.4,348.4 817.1,345.4 826.7,347.7 836.4,350.6 846.1,350.0 855.8,348.7 865.4,347.8 875.1,350.4 884.8,346.5 894.5,350.9 904.1,349.3 913.8,347.9 923.5,347.5 933.2,347.2 942.8,347.4 952.5,349.3 962.2,352.9 971.9,367.4 981.5,351.2 991.2,348.7 1000.9,345.2 1010.6,347.8 1020.2,348.8 1029.9,348.3 1039.6,349.1 1049.3,350.4 1058.9,352.1 1068.6,349.3 1078.3,350.2 1088.0,350.0 1097.6,348.6 1107.3,349.7 1117.0,347.5 1126.7,346.5 1136.3,355.5 1146.0,373.2 1155.7,356.3 1165.4,353.9 1175.0,350.6 1184.7,348.8" fill="none" stroke="#E24D42" stroke-width="1.0" stroke-linejoin="round"/><polyline points="671.9,407.1 681.6,374.8 691.3,418.7 701.0,416.8 710.6,411.1 720.3,418.8 730.0,417.8 739.7,411.2 749.3,418.0 759.0,417.6 768.7,410.6 778.4,416.1 788.0,417.3 797.7,415.8 807.4,412.6 817.1,417.8 826.7,410.6 836.4,416.9 846.1,418.2 855.8,417.1 865.4,408.5 875.1,417.8 884.8,418.9 894.5,411.3 904.1,420.0 913.8,417.8 923.5,410.8 933.2,417.7 942.8,417.9 952.5,409.0 962.2,419.4 971.9,420.4 981.5,417.5 991.2,420.1 1000.9,419.0 1010.6,415.0 1020.2,418.8 1029.9,419.4 1039.6,414.4 1049.3,419.1 1058.9,419.7 1068.6,413.8 1078.3,418.8 1088.0,418.9 1097.6,412.8 1107.3,419.4 1117.0,418.9 1126.7,413.7 1136.3,419.1 1146.0,419.6 1155.7,414.4 1165.4,420.2 1175.0,420.0 1184.7,416.2" fill="none" stroke="#b0764e" stroke-width="0.8" stroke-linejoin="round"/><polyline points="671.9,421.3 681.6,421.3 691.3,421.3 701.0,421.3 710.6,421.3 720.3,421.3 730.0,421.3 739.7,421.3 749.3,421.3 759.0,421.3 768.7,421.3 778.4,421.3 788.0,421.3 797.7,421.3 807.4,421.3 817.1,421.3 826.7,421.3 836.4,421.3 846.1,421.3 855.8,421.3 865.4,421.3 875.1,421.3 884.8,421.3 894.5,421.3 904.1,421.3 913.8,421.3 923.5,421.3 933.2,421.3 942.8,421.3 952.5,421.3 962.2,421.3 971.9,421.3 981.5,421.3 991.2,421.3 1000.9,421.3 1010.6,421.3 1020.2,421.3 1029.9,421.3 1039.6,421.3 1049.3,421.3 1058.9,421.3 1068.6,421.3 1078.3,421.3 1088.0,421.3 1097.6,421.3 1107.3,421.3 1117.0,421.3 1126.7,421.3 1136.3,421.3 1146.0,421.3 1155.7,421.3 1165.4,421.3 1175.0,421.3 1184.7,421.3" fill="none" stroke="#b89e20" stroke-width="2" stroke-linejoin="round"/><polyline points="671.9,407.2 681.6,374.3 691.3,418.3 701.0,417.1 710.6,410.7 720.3,418.6 730.0,418.3 739.7,410.7 749.3,418.3 759.0,417.8 768.7,410.7 778.4,416.0 788.0,417.8 797.7,415.6 807.4,412.2 817.1,417.8 826.7,410.2 836.4,416.8 846.1,417.8 855.8,417.5 865.4,408.7 875.1,417.8 884.8,419.4 894.5,410.7 904.1,419.8 913.8,418.3 923.5,410.7 933.2,417.8 942.8,418.3 952.5,409.4 962.2,419.4 971.9,420.9 981.5,417.4 991.2,420.1 1000.9,419.4 1010.6,414.5 1020.2,419.4 1029.9,419.8 1039.6,414.0 1049.3,419.4 1058.9,419.8 1068.6,413.7 1078.3,418.9 1088.0,418.9 1097.6,412.8 1107.3,419.4 1117.0,419.4 1126.7,413.3 1136.3,419.4 1146.0,420.1 1155.7,414.5 1165.4,419.8 1175.0,419.8 1184.7,416.3" fill="none" stroke="#5b86b8" stroke-width="1.2" stroke-linejoin="round"/><polyline points="671.9,347.2 681.6,348.3 691.3,351.8 701.0,347.6 710.6,349.9 720.3,349.1 730.0,348.5 739.7,348.5 749.3,348.3 759.0,346.8 768.7,348.5 778.4,349.3 788.0,348.9 797.7,347.6 807.4,346.8 817.1,346.7 826.7,347.6 836.4,349.1 846.1,349.3 855.8,348.9 865.4,348.4 875.1,348.9 884.8,347.8 894.5,350.1 904.1,348.2 913.8,349.0 923.5,348.0 933.2,347.8 942.8,347.2 952.5,349.7 962.2,351.7 971.9,366.0 981.5,351.8 991.2,347.5 1000.9,346.6 1010.6,349.1 1020.2,348.3 1029.9,347.3 1039.6,348.0 1049.3,348.9 1058.9,350.9 1068.6,350.1 1078.3,349.4 1088.0,348.6 1097.6,349.9 1107.3,349.7 1117.0,348.6 1126.7,347.6 1136.3,355.6 1146.0,372.6 1155.7,354.8 1165.4,355.1 1175.0,350.6 1184.7,347.2" fill="none" stroke="#d2691e" stroke-width="1.3" stroke-linejoin="round"/></g>
<text x="646.27" y="324.60" font-size="12" fill="#c4c5d2" textLength="19.53" lengthAdjust="spacingAndGlyphs">200</text>
<text x="646.27" y="349.80" font-size="12" fill="#c4c5d2" textLength="19.53" lengthAdjust="spacingAndGlyphs">150</text>
<text x="646.27" y="375.00" font-size="12" fill="#c4c5d2" textLength="19.53" lengthAdjust="spacingAndGlyphs">100</text>
<text x="652.77" y="400.20" font-size="12" fill="#c4c5d2" textLength="13.03" lengthAdjust="spacingAndGlyphs">50</text>
<text x="659.29" y="425.40" font-size="12" fill="#c4c5d2" textLength="6.51" lengthAdjust="spacingAndGlyphs">0</text>
<text x="715.08" y="440.30" font-size="12" fill="#c4c5d2" textLength="28.84" lengthAdjust="spacingAndGlyphs">17:48</text>
<text x="831.18" y="440.30" font-size="12" fill="#c4c5d2" textLength="28.84" lengthAdjust="spacingAndGlyphs">17:50</text>
<text x="947.28" y="440.30" font-size="12" fill="#c4c5d2" textLength="28.84" lengthAdjust="spacingAndGlyphs">17:52</text>
<text x="1063.38" y="440.30" font-size="12" fill="#c4c5d2" textLength="28.84" lengthAdjust="spacingAndGlyphs">17:54</text>
<text x="1179.48" y="440.30" font-size="12" fill="#c4c5d2" textLength="28.84" lengthAdjust="spacingAndGlyphs">17:56</text>
<text transform="translate(636.8,393.3) rotate(-90)" font-size="12" fill="#c4c5d2" textLength="30.92" lengthAdjust="spacingAndGlyphs">ops/s</text>
<rect x="635.1" y="465.1" width="14" height="4" rx="1" fill="#BA43A9"/>
<text x="663.10" y="469.40" font-size="12" fill="#ccccdc" textLength="185.03" lengthAdjust="spacingAndGlyphs">netdata.disk_ops.sdw.reads.mean</text>
<text x="860.53" y="469.40" font-size="12" fill="#ccccdc" textLength="33.06" lengthAdjust="spacingAndGlyphs">Avg: 0</text>
<rect x="904.3" y="465.1" width="14" height="4" rx="1" fill="#705DA0"/>
<text x="932.29" y="469.40" font-size="12" fill="#ccccdc" textLength="182.64" lengthAdjust="spacingAndGlyphs">netdata.disk_ops.sdx.reads.mean</text>
<text x="1127.33" y="469.40" font-size="12" fill="#ccccdc" textLength="33.06" lengthAdjust="spacingAndGlyphs">Avg: 0</text>
<rect x="635.1" y="486.1" width="14" height="4" rx="1" fill="#508642"/>
<text x="663.10" y="490.40" font-size="12" fill="#ccccdc" textLength="181.73" lengthAdjust="spacingAndGlyphs">netdata.disk_ops.sdy.reads.mean</text>
<text x="857.23" y="490.40" font-size="12" fill="#ccccdc" textLength="33.06" lengthAdjust="spacingAndGlyphs">Avg: 0</text>
<rect x="901.0" y="486.1" width="14" height="4" rx="1" fill="#CCA300"/>
<text x="929.00" y="490.40" font-size="12" fill="#ccccdc" textLength="182.64" lengthAdjust="spacingAndGlyphs">netdata.disk_ops.sdz.reads.mean</text>
<text x="1124.04" y="490.40" font-size="12" fill="#ccccdc" textLength="33.06" lengthAdjust="spacingAndGlyphs">Avg: 0</text>
<rect x="635.1" y="507.1" width="14" height="4" rx="1" fill="#447EBC"/>
<text x="663.10" y="511.40" font-size="12" fill="#ccccdc" textLength="44.80" lengthAdjust="spacingAndGlyphs">Mean-W</text>
<text x="720.30" y="511.40" font-size="12" fill="#ccccdc" textLength="49.94" lengthAdjust="spacingAndGlyphs">Avg: 10.1</text>
<rect x="780.9" y="507.1" width="14" height="4" rx="1" fill="#C15C17"/>
<text x="808.94" y="511.40" font-size="12" fill="#ccccdc" textLength="41.49" lengthAdjust="spacingAndGlyphs">Mean-R</text>
<text x="862.83" y="511.40" font-size="12" fill="#ccccdc" textLength="46.72" lengthAdjust="spacingAndGlyphs">Avg: 140</text>
<rect x="744.0" y="451.3" width="1.5" height="0.8" fill="#ccccdc" opacity="0.8"/>
<rect x="875.3" y="451.3" width="2.5" height="0.8" fill="#ccccdc" opacity="0.8"/>
<rect x="1025" y="451.3" width="1.5" height="0.8" fill="#ccccdc" opacity="0.8"/>
<rect x="1154.5" y="451.3" width="2.5" height="0.8" fill="#ccccdc" opacity="0.8"/></g>
<g id="p6"><rect x="1229.5" y="269.5" width="604" height="257" rx="2.5" fill="#181b1f" stroke="#25272c"/>
<text x="1518.18" y="290.50" font-size="14" fill="#ccccdc" textLength="27.23" lengthAdjust="spacingAndGlyphs" stroke="#ccccdc" stroke-width="0.35">CPU</text>
<rect x="1273.0" y="320" width="536.0" height="1" fill="rgba(200,200,200,0.22)"/>
<rect x="1273.0" y="352" width="536.0" height="1" fill="rgba(200,200,200,0.22)"/>
<rect x="1273.0" y="383" width="536.0" height="1" fill="rgba(200,200,200,0.22)"/>
<rect x="1273.0" y="415" width="536.0" height="1" fill="rgba(200,200,200,0.22)"/>
<rect x="1273.0" y="446" width="536.0" height="1" fill="rgba(200,200,200,0.22)"/>
<rect x="1331" y="320" width="1" height="127" fill="rgba(200,200,200,0.22)"/>
<rect x="1450" y="320" width="1" height="127" fill="rgba(200,200,200,0.22)"/>
<rect x="1569" y="320" width="1" height="127" fill="rgba(200,200,200,0.22)"/>
<rect x="1688" y="320" width="1" height="127" fill="rgba(200,200,200,0.22)"/>
<rect x="1806" y="320" width="1" height="127" fill="rgba(200,200,200,0.22)"/>
<g clip-path="url(#c5)"><polygon points="1272.8,416.3 1282.7,416.5 1292.6,416.7 1302.5,414.6 1312.4,416.2 1322.3,416.5 1332.2,416.4 1342.1,416.5 1352.0,416.4 1361.9,416.5 1371.8,416.7 1381.7,416.6 1391.6,416.4 1401.5,416.2 1411.4,415.6 1421.3,416.0 1431.2,416.4 1441.1,416.5 1451.0,416.4 1460.9,416.5 1470.8,416.6 1480.7,416.5 1490.6,416.7 1500.5,417.3 1510.4,416.6 1520.3,416.4 1530.2,416.5 1540.1,416.4 1550.0,415.6 1559.9,416.9 1569.8,418.1 1579.7,422.2 1589.6,417.6 1599.5,415.8 1609.4,416.4 1619.3,416.6 1629.2,416.6 1639.1,416.5 1649.0,416.3 1658.9,416.6 1668.8,417.3 1678.7,416.9 1688.6,416.6 1698.5,416.8 1708.4,416.6 1718.3,416.9 1728.2,417.0 1738.1,416.4 1748.0,418.4 1757.9,424.5 1767.7,418.9 1777.6,419.5 1787.5,417.6 1797.4,416.4 1797.4,446.5 1787.5,446.5 1777.6,446.5 1767.7,446.5 1757.9,446.5 1748.0,446.5 1738.1,446.5 1728.2,446.5 1718.3,446.5 1708.4,446.5 1698.5,446.5 1688.6,446.5 1678.7,446.5 1668.8,446.5 1658.9,446.5 1649.0,446.5 1639.1,446.5 1629.2,446.5 1619.3,446.5 1609.4,446.5 1599.5,446.5 1589.6,446.5 1579.7,446.5 1569.8,446.5 1559.9,446.5 1550.0,446.5 1540.1,446.5 1530.2,446.5 1520.3,446.5 1510.4,446.5 1500.5,446.5 1490.6,446.5 1480.7,446.5 1470.8,446.5 1460.9,446.5 1451.0,446.5 1441.1,446.5 1431.2,446.5 1421.3,446.5 1411.4,446.5 1401.5,446.5 1391.6,446.5 1381.7,446.5 1371.8,446.5 1361.9,446.5 1352.0,446.5 1342.1,446.5 1332.2,446.5 1322.3,446.5 1312.4,446.5 1302.5,446.5 1292.6,446.5 1282.7,446.5 1272.8,446.5" fill="#7EB26D" fill-opacity="0.1"/><polygon points="1272.8,411.3 1282.7,411.6 1292.6,411.8 1302.5,409.2 1312.4,411.2 1322.3,411.6 1332.2,411.6 1342.1,411.7 1352.0,411.6 1361.9,411.7 1371.8,411.9 1381.7,411.8 1391.6,411.6 1401.5,411.3 1411.4,410.6 1421.3,411.0 1431.2,411.6 1441.1,411.7 1451.0,411.6 1460.9,411.7 1470.8,411.8 1480.7,411.7 1490.6,411.9 1500.5,412.6 1510.4,411.8 1520.3,411.6 1530.2,411.7 1540.1,411.5 1550.0,410.8 1559.9,412.3 1569.8,413.8 1579.7,418.4 1589.6,413.8 1599.5,410.9 1609.4,411.5 1619.3,411.8 1629.2,411.7 1639.1,411.6 1649.0,411.4 1658.9,411.7 1668.8,412.7 1678.7,412.2 1688.6,411.8 1698.5,412.1 1708.4,411.9 1718.3,412.2 1728.2,412.3 1738.1,411.5 1748.0,413.8 1757.9,421.0 1767.7,414.6 1777.6,415.0 1787.5,413.0 1797.4,411.5 1797.4,416.4 1787.5,417.6 1777.6,419.5 1767.7,418.9 1757.9,424.5 1748.0,418.4 1738.1,416.4 1728.2,417.0 1718.3,416.9 1708.4,416.6 1698.5,416.8 1688.6,416.6 1678.7,416.9 1668.8,417.3 1658.9,416.6 1649.0,416.3 1639.1,416.5 1629.2,416.6 1619.3,416.6 1609.4,416.4 1599.5,415.8 1589.6,417.6 1579.7,422.2 1569.8,418.1 1559.9,416.9 1550.0,415.6 1540.1,416.4 1530.2,416.5 1520.3,416.4 1510.4,416.6 1500.5,417.3 1490.6,416.7 1480.7,416.5 1470.8,416.6 1460.9,416.5 1451.0,416.4 1441.1,416.5 1431.2,416.4 1421.3,416.0 1411.4,415.6 1401.5,416.2 1391.6,416.4 1381.7,416.6 1371.8,416.7 1361.9,416.5 1352.0,416.4 1342.1,416.5 1332.2,416.4 1322.3,416.5 1312.4,416.2 1302.5,414.6 1292.6,416.7 1282.7,416.5 1272.8,416.3" fill="#EAB839" fill-opacity="0.1"/><polygon points="1272.8,373.0 1282.7,372.1 1292.6,371.0 1302.5,368.7 1312.4,370.7 1322.3,370.4 1332.2,370.0 1342.1,371.8 1352.0,370.6 1361.9,372.1 1371.8,371.3 1381.7,371.8 1391.6,370.9 1401.5,371.2 1411.4,369.8 1421.3,372.3 1431.2,371.8 1441.1,372.1 1451.0,370.6 1460.9,371.8 1470.8,372.9 1480.7,371.0 1490.6,372.3 1500.5,372.4 1510.4,372.1 1520.3,371.2 1530.2,372.6 1540.1,372.1 1550.0,370.0 1559.9,371.5 1569.8,373.0 1579.7,377.6 1589.6,373.0 1599.5,370.0 1609.4,370.9 1619.3,371.8 1629.2,371.5 1639.1,371.5 1649.0,369.7 1658.9,370.6 1668.8,373.9 1678.7,372.7 1688.6,372.4 1698.5,373.6 1708.4,372.7 1718.3,373.8 1728.2,374.2 1738.1,371.5 1748.0,373.0 1757.9,377.6 1767.7,373.3 1777.6,374.1 1787.5,373.3 1797.4,371.2 1797.4,411.5 1787.5,413.0 1777.6,415.0 1767.7,414.6 1757.9,421.0 1748.0,413.8 1738.1,411.5 1728.2,412.3 1718.3,412.2 1708.4,411.9 1698.5,412.1 1688.6,411.8 1678.7,412.2 1668.8,412.7 1658.9,411.7 1649.0,411.4 1639.1,411.6 1629.2,411.7 1619.3,411.8 1609.4,411.5 1599.5,410.9 1589.6,413.8 1579.7,418.4 1569.8,413.8 1559.9,412.3 1550.0,410.8 1540.1,411.5 1530.2,411.7 1520.3,411.6 1510.4,411.8 1500.5,412.6 1490.6,411.9 1480.7,411.7 1470.8,411.8 1460.9,411.7 1451.0,411.6 1441.1,411.7 1431.2,411.6 1421.3,411.0 1411.4,410.6 1401.5,411.3 1391.6,411.6 1381.7,411.8 1371.8,411.9 1361.9,411.7 1352.0,411.6 1342.1,411.7 1332.2,411.6 1322.3,411.6 1312.4,411.2 1302.5,409.2 1292.6,411.8 1282.7,411.6 1272.8,411.3" fill="#6ED0E0" fill-opacity="0.1"/><polygon points="1272.8,321.5 1282.7,321.5 1292.6,321.6 1302.5,321.7 1312.4,321.5 1322.3,321.5 1332.2,321.5 1342.1,321.7 1352.0,321.5 1361.9,321.7 1371.8,321.6 1381.7,321.5 1391.6,321.6 1401.5,321.6 1411.4,321.6 1421.3,321.7 1431.2,321.5 1441.1,321.5 1451.0,321.7 1460.9,321.6 1470.8,321.5 1480.7,321.5 1490.6,321.6 1500.5,321.7 1510.4,321.5 1520.3,321.5 1530.2,321.6 1540.1,321.6 1550.0,321.7 1559.9,321.7 1569.8,321.6 1579.7,321.5 1589.6,321.7 1599.5,321.7 1609.4,321.5 1619.3,321.7 1629.2,321.7 1639.1,321.6 1649.0,321.5 1658.9,321.7 1668.8,321.7 1678.7,321.5 1688.6,321.6 1698.5,321.5 1708.4,321.5 1718.3,321.6 1728.2,321.6 1738.1,321.6 1748.0,321.6 1757.9,321.7 1767.7,321.7 1777.6,321.7 1787.5,321.7 1797.4,321.7 1797.4,371.2 1787.5,373.3 1777.6,374.1 1767.7,373.3 1757.9,377.6 1748.0,373.0 1738.1,371.5 1728.2,374.2 1718.3,373.8 1708.4,372.7 1698.5,373.6 1688.6,372.4 1678.7,372.7 1668.8,373.9 1658.9,370.6 1649.0,369.7 1639.1,371.5 1629.2,371.5 1619.3,371.8 1609.4,370.9 1599.5,370.0 1589.6,373.0 1579.7,377.6 1569.8,373.0 1559.9,371.5 1550.0,370.0 1540.1,372.1 1530.2,372.6 1520.3,371.2 1510.4,372.1 1500.5,372.4 1490.6,372.3 1480.7,371.0 1470.8,372.9 1460.9,371.8 1451.0,370.6 1441.1,372.1 1431.2,371.8 1421.3,372.3 1411.4,369.8 1401.5,371.2 1391.6,370.9 1381.7,371.8 1371.8,371.3 1361.9,372.1 1352.0,370.6 1342.1,371.8 1332.2,370.0 1322.3,370.4 1312.4,370.7 1302.5,368.7 1292.6,371.0 1282.7,372.1 1272.8,373.0" fill="#EF843C" fill-opacity="0.1"/><polyline points="1272.8,416.3 1282.7,416.5 1292.6,416.7 1302.5,414.6 1312.4,416.2 1322.3,416.5 1332.2,416.4 1342.1,416.5 1352.0,416.4 1361.9,416.5 1371.8,416.7 1381.7,416.6 1391.6,416.4 1401.5,416.2 1411.4,415.6 1421.3,416.0 1431.2,416.4 1441.1,416.5 1451.0,416.4 1460.9,416.5 1470.8,416.6 1480.7,416.5 1490.6,416.7 1500.5,417.3 1510.4,416.6 1520.3,416.4 1530.2,416.5 1540.1,416.4 1550.0,415.6 1559.9,416.9 1569.8,418.1 1579.7,422.2 1589.6,417.6 1599.5,415.8 1609.4,416.4 1619.3,416.6 1629.2,416.6 1639.1,416.5 1649.0,416.3 1658.9,416.6 1668.8,417.3 1678.7,416.9 1688.6,416.6 1698.5,416.8 1708.4,416.6 1718.3,416.9 1728.2,417.0 1738.1,416.4 1748.0,418.4 1757.9,424.5 1767.7,418.9 1777.6,419.5 1787.5,417.6 1797.4,416.4" fill="none" stroke="#7EB26D" stroke-width="1" stroke-linejoin="round"/><polyline points="1272.8,411.3 1282.7,411.6 1292.6,411.8 1302.5,409.2 1312.4,411.2 1322.3,411.6 1332.2,411.6 1342.1,411.7 1352.0,411.6 1361.9,411.7 1371.8,411.9 1381.7,411.8 1391.6,411.6 1401.5,411.3 1411.4,410.6 1421.3,411.0 1431.2,411.6 1441.1,411.7 1451.0,411.6 1460.9,411.7 1470.8,411.8 1480.7,411.7 1490.6,411.9 1500.5,412.6 1510.4,411.8 1520.3,411.6 1530.2,411.7 1540.1,411.5 1550.0,410.8 1559.9,412.3 1569.8,413.8 1579.7,418.4 1589.6,413.8 1599.5,410.9 1609.4,411.5 1619.3,411.8 1629.2,411.7 1639.1,411.6 1649.0,411.4 1658.9,411.7 1668.8,412.7 1678.7,412.2 1688.6,411.8 1698.5,412.1 1708.4,411.9 1718.3,412.2 1728.2,412.3 1738.1,411.5 1748.0,413.8 1757.9,421.0 1767.7,414.6 1777.6,415.0 1787.5,413.0 1797.4,411.5" fill="none" stroke="#EAB839" stroke-width="1.35" stroke-linejoin="round"/><polyline points="1272.8,373.0 1282.7,372.1 1292.6,371.0 1302.5,368.7 1312.4,370.7 1322.3,370.4 1332.2,370.0 1342.1,371.8 1352.0,370.6 1361.9,372.1 1371.8,371.3 1381.7,371.8 1391.6,370.9 1401.5,371.2 1411.4,369.8 1421.3,372.3 1431.2,371.8 1441.1,372.1 1451.0,370.6 1460.9,371.8 1470.8,372.9 1480.7,371.0 1490.6,372.3 1500.5,372.4 1510.4,372.1 1520.3,371.2 1530.2,372.6 1540.1,372.1 1550.0,370.0 1559.9,371.5 1569.8,373.0 1579.7,377.6 1589.6,373.0 1599.5,370.0 1609.4,370.9 1619.3,371.8 1629.2,371.5 1639.1,371.5 1649.0,369.7 1658.9,370.6 1668.8,373.9 1678.7,372.7 1688.6,372.4 1698.5,373.6 1708.4,372.7 1718.3,373.8 1728.2,374.2 1738.1,371.5 1748.0,373.0 1757.9,377.6 1767.7,373.3 1777.6,374.1 1787.5,373.3 1797.4,371.2" fill="none" stroke="#6ED0E0" stroke-width="1" stroke-linejoin="round"/><polyline points="1272.8,321.5 1282.7,321.5 1292.6,321.6 1302.5,321.7 1312.4,321.5 1322.3,321.5 1332.2,321.5 1342.1,321.7 1352.0,321.5 1361.9,321.7 1371.8,321.6 1381.7,321.5 1391.6,321.6 1401.5,321.6 1411.4,321.6 1421.3,321.7 1431.2,321.5 1441.1,321.5 1451.0,321.7 1460.9,321.6 1470.8,321.5 1480.7,321.5 1490.6,321.6 1500.5,321.7 1510.4,321.5 1520.3,321.5 1530.2,321.6 1540.1,321.6 1550.0,321.7 1559.9,321.7 1569.8,321.6 1579.7,321.5 1589.6,321.7 1599.5,321.7 1609.4,321.5 1619.3,321.7 1629.2,321.7 1639.1,321.6 1649.0,321.5 1658.9,321.7 1668.8,321.7 1678.7,321.5 1688.6,321.6 1698.5,321.5 1708.4,321.5 1718.3,321.6 1728.2,321.6 1738.1,321.6 1748.0,321.6 1757.9,321.7 1767.7,321.7 1777.6,321.7 1787.5,321.7 1797.4,321.7" fill="none" stroke="#EF843C" stroke-width="1.5" stroke-linejoin="round"/></g>
<text x="1239.78" y="324.60" font-size="12" fill="#c4c5d2" textLength="28.02" lengthAdjust="spacingAndGlyphs">100%</text>
<text x="1246.30" y="356.10" font-size="12" fill="#c4c5d2" textLength="21.50" lengthAdjust="spacingAndGlyphs">75%</text>
<text x="1246.30" y="387.60" font-size="12" fill="#c4c5d2" textLength="21.50" lengthAdjust="spacingAndGlyphs">50%</text>
<text x="1246.30" y="419.10" font-size="12" fill="#c4c5d2" textLength="21.50" lengthAdjust="spacingAndGlyphs">25%</text>
<text x="1252.80" y="450.60" font-size="12" fill="#c4c5d2" textLength="15.00" lengthAdjust="spacingAndGlyphs">0%</text>
<text x="1317.28" y="465.50" font-size="12" fill="#c4c5d2" textLength="28.84" lengthAdjust="spacingAndGlyphs">17:48</text>
<text x="1436.07" y="465.50" font-size="12" fill="#c4c5d2" textLength="28.84" lengthAdjust="spacingAndGlyphs">17:50</text>
<text x="1554.85" y="465.50" font-size="12" fill="#c4c5d2" textLength="28.84" lengthAdjust="spacingAndGlyphs">17:52</text>
<text x="1673.64" y="465.50" font-size="12" fill="#c4c5d2" textLength="28.84" lengthAdjust="spacingAndGlyphs">17:54</text>
<text x="1792.43" y="465.50" font-size="12" fill="#c4c5d2" textLength="28.84" lengthAdjust="spacingAndGlyphs">17:56</text>
<rect x="1248.1" y="486.1" width="14" height="4" rx="1" fill="#7EB26D"/>
<text x="1276.10" y="490.40" font-size="12" fill="#ccccdc" textLength="24.87" lengthAdjust="spacingAndGlyphs">User</text>
<text x="1313.37" y="490.40" font-size="12" fill="#ccccdc" textLength="58.85" lengthAdjust="spacingAndGlyphs">Min: 17.2%</text>
<text x="1379.02" y="490.40" font-size="12" fill="#ccccdc" textLength="58.83" lengthAdjust="spacingAndGlyphs">Avg: 23.1%</text>
<rect x="1448.6" y="486.1" width="14" height="4" rx="1" fill="#EAB839"/>
<text x="1476.55" y="490.40" font-size="12" fill="#ccccdc" textLength="40.57" lengthAdjust="spacingAndGlyphs">System</text>
<text x="1529.52" y="490.40" font-size="12" fill="#ccccdc" textLength="58.85" lengthAdjust="spacingAndGlyphs">Min: 2.98%</text>
<text x="1595.17" y="490.40" font-size="12" fill="#ccccdc" textLength="58.83" lengthAdjust="spacingAndGlyphs">Avg: 3.84%</text>
<rect x="1248.1" y="507.1" width="14" height="4" rx="1" fill="#6ED0E0"/>
<text x="1276.10" y="511.40" font-size="12" fill="#ccccdc" textLength="33.12" lengthAdjust="spacingAndGlyphs">Iowait</text>
<text x="1321.62" y="511.40" font-size="12" fill="#ccccdc" textLength="58.85" lengthAdjust="spacingAndGlyphs">Min: 30.2%</text>
<text x="1387.27" y="511.40" font-size="12" fill="#ccccdc" textLength="58.83" lengthAdjust="spacingAndGlyphs">Avg: 31.7%</text>
<rect x="1456.8" y="507.1" width="14" height="4" rx="1" fill="#EF843C"/>
<text x="1484.80" y="511.40" font-size="12" fill="#ccccdc" textLength="19.33" lengthAdjust="spacingAndGlyphs">idle</text>
<text x="1516.53" y="511.40" font-size="12" fill="#ccccdc" textLength="58.85" lengthAdjust="spacingAndGlyphs">Min: 37.3%</text>
<text x="1582.18" y="511.40" font-size="12" fill="#ccccdc" textLength="58.83" lengthAdjust="spacingAndGlyphs">Avg: 40.0%</text></g>
<g id="p7"><rect x="3.5" y="535.5" width="604" height="295" rx="2.5" fill="#181b1f" stroke="#25272c"/>
<text x="271.52" y="556.50" font-size="14" fill="#ccccdc" textLength="68.56" lengthAdjust="spacingAndGlyphs" stroke="#ccccdc" stroke-width="0.35">used inode</text>
<rect x="65.0" y="586" width="517.8" height="1" fill="rgba(200,200,200,0.22)"/>
<rect x="65.0" y="617" width="517.8" height="1" fill="rgba(200,200,200,0.22)"/>
<rect x="65.0" y="649" width="517.8" height="1" fill="rgba(200,200,200,0.22)"/>
<rect x="65.0" y="681" width="517.8" height="1" fill="rgba(200,200,200,0.22)"/>
<rect x="65.0" y="712" width="517.8" height="1" fill="rgba(200,200,200,0.22)"/>
<rect x="121" y="586" width="1" height="127" fill="rgba(200,200,200,0.22)"/>
<rect x="236" y="586" width="1" height="127" fill="rgba(200,200,200,0.22)"/>
<rect x="351" y="586" width="1" height="127" fill="rgba(200,200,200,0.22)"/>
<rect x="466" y="586" width="1" height="127" fill="rgba(200,200,200,0.22)"/>
<rect x="580" y="586" width="1" height="127" fill="rgba(200,200,200,0.22)"/>
<g clip-path="url(#c6)"><polyline points="65.0,712.6 74.6,712.6 84.1,712.6 93.7,712.6 103.3,712.6 112.8,712.6 122.4,712.6 131.9,712.6 141.5,712.6 151.1,712.6 160.6,712.6 170.2,712.6 179.7,712.6 189.3,712.6 198.9,712.6 208.4,712.6 218.0,712.6 227.5,712.6 237.1,712.6 246.7,712.6 256.2,712.6 265.8,712.6 275.3,712.6 284.9,712.6 294.5,712.6 304.0,712.6 313.6,712.6 323.1,712.6 332.7,712.6 342.3,712.6 351.8,712.6 361.4,712.6 370.9,712.6 380.5,712.6 390.1,712.6 399.6,712.6 409.2,712.6 418.8,712.6 428.3,712.6 437.9,712.6 447.4,712.6 457.0,712.6 466.6,712.6 476.1,712.6 485.7,712.6 495.2,712.6 504.8,712.6 514.4,712.6 523.9,712.6 533.5,712.6 543.0,712.6 552.6,712.6 562.2,712.6 571.7,712.6" fill="none" stroke="#584477" stroke-width="1.0" stroke-linejoin="round"/><polyline points="65.0,712.6 74.6,712.6 84.1,712.6 93.7,712.6 103.3,712.6 112.8,712.6 122.4,712.6 131.9,712.6 141.5,712.6 151.1,712.6 160.6,712.6 170.2,712.6 179.7,712.6 189.3,712.6 198.9,712.6 208.4,712.6 218.0,712.6 227.5,712.6 237.1,712.6 246.7,712.6 256.2,712.6 265.8,712.6 275.3,712.6 284.9,712.6 294.5,712.6 304.0,712.6 313.6,712.6 323.1,712.6 332.7,712.6 342.3,712.6 351.8,712.6 361.4,712.6 370.9,712.6 380.5,712.6 390.1,712.6 399.6,712.6 409.2,712.6 418.8,712.6 428.3,712.6 437.9,712.6 447.4,712.6 457.0,712.6 466.6,712.6 476.1,712.6 485.7,712.6 495.2,712.6 504.8,712.6 514.4,712.6 523.9,712.6 533.5,712.6 543.0,712.6 552.6,712.6 562.2,712.6 571.7,712.6" fill="none" stroke="#B7DBAB" stroke-width="1.0" stroke-linejoin="round"/><polyline points="65.0,712.6 74.6,712.6 84.1,712.6 93.7,712.6 103.3,712.6 112.8,712.6 122.4,712.6 131.9,712.6 141.5,712.6 151.1,712.6 160.6,712.6 170.2,712.6 179.7,712.6 189.3,712.6 198.9,712.6 208.4,712.6 218.0,712.6 227.5,712.6 237.1,712.6 246.7,712.6 256.2,712.6 265.8,712.6 275.3,712.6 284.9,712.6 294.5,712.6 304.0,712.6 313.6,712.6 323.1,712.6 332.7,712.6 342.3,712.6 351.8,712.6 361.4,712.6 370.9,712.6 380.5,712.6 390.1,712.6 399.6,712.6 409.2,712.6 418.8,712.6 428.3,712.6 437.9,712.6 447.4,712.6 457.0,712.6 466.6,712.6 476.1,712.6 485.7,712.6 495.2,712.6 504.8,712.6 514.4,712.6 523.9,712.6 533.5,712.6 543.0,712.6 552.6,712.6 562.2,712.6 571.7,712.6" fill="none" stroke="#F4D598" stroke-width="2.2" stroke-linejoin="round"/><polyline points="65.0,615.7 74.6,615.7 84.1,615.7 93.7,615.7 103.3,615.7 112.8,615.7 122.4,615.7 131.9,615.7 141.5,615.7 151.1,615.7 160.6,615.7 170.2,615.7 179.7,615.7 189.3,615.7 198.9,615.7 208.4,615.7 218.0,615.7 227.5,615.7 237.1,615.7 246.7,615.7 256.2,615.7 265.8,615.7 275.3,615.7 284.9,615.7 294.5,615.7 304.0,615.7 313.6,615.7 323.1,615.7 332.7,615.7 342.3,615.7 351.8,615.7 361.4,615.7 370.9,615.7 380.5,615.7 390.1,615.7 399.6,615.7 409.2,615.7 418.8,615.7 428.3,615.7 437.9,615.7 447.4,615.7 457.0,615.7 466.6,615.7 476.1,615.7 485.7,615.7 495.2,615.7 504.8,615.7 514.4,615.7 523.9,615.7 533.5,615.7 543.0,615.7 552.6,615.7 562.2,615.7 571.7,615.7" fill="none" stroke="#70DBED" stroke-width="1.3" stroke-linejoin="round"/></g>
<text x="14.23" y="590.30" font-size="12" fill="#c4c5d2" textLength="45.57" lengthAdjust="spacingAndGlyphs">2000000</text>
<text x="14.23" y="621.90" font-size="12" fill="#c4c5d2" textLength="45.57" lengthAdjust="spacingAndGlyphs">1500000</text>
<text x="14.23" y="653.50" font-size="12" fill="#c4c5d2" textLength="45.57" lengthAdjust="spacingAndGlyphs">1000000</text>
<text x="20.75" y="685.10" font-size="12" fill="#c4c5d2" textLength="39.05" lengthAdjust="spacingAndGlyphs">500000</text>
<text x="53.29" y="716.70" font-size="12" fill="#c4c5d2" textLength="6.51" lengthAdjust="spacingAndGlyphs">0</text>
<text x="107.48" y="731.60" font-size="12" fill="#c4c5d2" textLength="28.84" lengthAdjust="spacingAndGlyphs">17:48</text>
<text x="222.20" y="731.60" font-size="12" fill="#c4c5d2" textLength="28.84" lengthAdjust="spacingAndGlyphs">17:50</text>
<text x="336.93" y="731.60" font-size="12" fill="#c4c5d2" textLength="28.84" lengthAdjust="spacingAndGlyphs">17:52</text>
<text x="451.65" y="731.60" font-size="12" fill="#c4c5d2" textLength="28.84" lengthAdjust="spacingAndGlyphs">17:54</text>
<text x="566.38" y="731.60" font-size="12" fill="#c4c5d2" textLength="28.84" lengthAdjust="spacingAndGlyphs">17:56</text>
<rect x="22.1" y="748.1" width="14" height="4" rx="1" fill="#584477"/>
<text x="50.10" y="752.40" font-size="12" fill="#ccccdc" textLength="231.23" lengthAdjust="spacingAndGlyphs">netdata.disk_inodes._srv_node_disk7.used</text>
<text x="293.73" y="752.40" font-size="12" fill="#ccccdc" textLength="36.06" lengthAdjust="spacingAndGlyphs">Max: 3</text>
<text x="336.59" y="752.40" font-size="12" fill="#ccccdc" textLength="33.06" lengthAdjust="spacingAndGlyphs">Avg: 3</text>
<rect x="22.1" y="769.1" width="14" height="4" rx="1" fill="#B7DBAB"/>
<text x="50.10" y="773.40" font-size="12" fill="#ccccdc" textLength="231.23" lengthAdjust="spacingAndGlyphs">netdata.disk_inodes._srv_node_disk8.used</text>
<text x="293.73" y="773.40" font-size="12" fill="#ccccdc" textLength="36.06" lengthAdjust="spacingAndGlyphs">Max: 3</text>
<text x="336.59" y="773.40" font-size="12" fill="#ccccdc" textLength="33.06" lengthAdjust="spacingAndGlyphs">Avg: 3</text>
<rect x="22.1" y="790.1" width="14" height="4" rx="1" fill="#F4D598"/>
<text x="50.10" y="794.40" font-size="12" fill="#ccccdc" textLength="231.23" lengthAdjust="spacingAndGlyphs">netdata.disk_inodes._srv_node_disk9.used</text>
<text x="293.73" y="794.40" font-size="12" fill="#ccccdc" textLength="36.06" lengthAdjust="spacingAndGlyphs">Max: 3</text>
<text x="336.59" y="794.40" font-size="12" fill="#ccccdc" textLength="33.06" lengthAdjust="spacingAndGlyphs">Avg: 3</text>
<rect x="22.1" y="811.1" width="14" height="4" rx="1" fill="#70DBED"/>
<text x="50.10" y="815.40" font-size="12" fill="#ccccdc" textLength="70.34" lengthAdjust="spacingAndGlyphs">Mean-inodes</text>
<text x="132.84" y="815.40" font-size="12" fill="#ccccdc" textLength="77.05" lengthAdjust="spacingAndGlyphs">Max: 1533181</text>
<text x="216.69" y="815.40" font-size="12" fill="#ccccdc" textLength="74.06" lengthAdjust="spacingAndGlyphs">Avg: 1533180</text></g>
<g id="p8"><rect x="616.5" y="535.5" width="604" height="295" rx="2.5" fill="#181b1f" stroke="#25272c"/>
<text x="859.61" y="556.50" font-size="14" fill="#ccccdc" textLength="118.38" lengthAdjust="spacingAndGlyphs" stroke="#ccccdc" stroke-width="0.35">Memory Utilization</text>
<rect x="676.3" y="586" width="519.7" height="1" fill="rgba(200,200,200,0.22)"/>
<rect x="676.3" y="628" width="519.7" height="1" fill="rgba(200,200,200,0.22)"/>
<rect x="676.3" y="670" width="519.7" height="1" fill="rgba(200,200,200,0.22)"/>
<rect x="676.3" y="712" width="519.7" height="1" fill="rgba(200,200,200,0.22)"/>
<rect x="733" y="586" width="1" height="127" fill="rgba(200,200,200,0.22)"/>
<rect x="848" y="586" width="1" height="127" fill="rgba(200,200,200,0.22)"/>
<rect x="963" y="586" width="1" height="127" fill="rgba(200,200,200,0.22)"/>
<rect x="1078" y="586" width="1" height="127" fill="rgba(200,200,200,0.22)"/>
<rect x="1193" y="586" width="1" height="127" fill="rgba(200,200,200,0.22)"/>
<g clip-path="url(#c7)"><polygon points="676.3,692.1 686.2,692.1 695.7,692.1 705.3,692.1 714.9,692.1 724.5,692.1 734.1,692.1 743.7,692.1 753.3,692.1 762.8,692.1 772.4,692.1 782.0,692.1 791.6,692.1 801.2,692.1 810.8,692.1 820.3,692.1 829.9,692.1 839.5,692.1 849.1,692.1 858.7,692.1 868.3,692.1 877.9,692.1 887.4,692.1 897.0,692.1 906.6,692.1 916.2,692.1 925.8,692.1 935.4,692.1 945.0,692.1 954.5,692.1 964.1,692.1 973.7,692.1 983.3,692.1 992.9,692.1 1002.5,692.1 1012.1,692.1 1021.6,692.1 1031.2,692.1 1040.8,692.1 1050.4,692.1 1060.0,692.1 1069.6,692.1 1079.2,692.1 1088.7,692.1 1098.3,692.1 1107.9,692.1 1117.5,692.1 1127.1,692.1 1136.7,692.1 1146.3,692.1 1155.8,692.1 1165.4,692.1 1175.0,692.1 1184.6,692.1 1184.6,712.5 1175.0,712.5 1165.4,712.5 1155.8,712.5 1146.3,712.5 1136.7,712.5 1127.1,712.5 1117.5,712.5 1107.9,712.5 1098.3,712.5 1088.7,712.5 1079.2,712.5 1069.6,712.5 1060.0,712.5 1050.4,712.5 1040.8,712.5 1031.2,712.5 1021.6,712.5 1012.1,712.5 1002.5,712.5 992.9,712.5 983.3,712.5 973.7,712.5 964.1,712.5 954.5,712.5 945.0,712.5 935.4,712.5 925.8,712.5 916.2,712.5 906.6,712.5 897.0,712.5 887.4,712.5 877.9,712.5 868.3,712.5 858.7,712.5 849.1,712.5 839.5,712.5 829.9,712.5 820.3,712.5 810.8,712.5 801.2,712.5 791.6,712.5 782.0,712.5 772.4,712.5 762.8,712.5 753.3,712.5 743.7,712.5 734.1,712.5 724.5,712.5 714.9,712.5 705.3,712.5 695.7,712.5 686.2,712.5 676.3,712.5" fill="#7EB26D" fill-opacity="0.1"/><polygon points="676.3,661.1 686.2,661.1 695.7,661.1 705.3,661.1 714.9,661.1 724.5,661.1 734.1,661.1 743.7,661.1 753.3,661.1 762.8,661.1 772.4,661.1 782.0,661.1 791.6,661.1 801.2,661.1 810.8,661.1 820.3,661.1 829.9,661.1 839.5,661.1 849.1,661.1 858.7,661.1 868.3,661.1 877.9,661.1 887.4,661.1 897.0,661.1 906.6,661.1 916.2,661.1 925.8,661.1 935.4,661.1 945.0,661.1 954.5,661.1 964.1,661.1 973.7,661.1 983.3,661.1 992.9,661.1 1002.5,661.1 1012.1,661.1 1021.6,661.1 1031.2,661.1 1040.8,661.1 1050.4,661.1 1060.0,661.1 1069.6,661.1 1079.2,661.1 1088.7,661.1 1098.3,661.1 1107.9,661.1 1117.5,661.1 1127.1,661.1 1136.7,661.1 1146.3,661.1 1155.8,661.1 1165.4,661.1 1175.0,661.1 1184.6,661.1 1184.6,692.1 1175.0,692.1 1165.4,692.1 1155.8,692.1 1146.3,692.1 1136.7,692.1 1127.1,692.1 1117.5,692.1 1107.9,692.1 1098.3,692.1 1088.7,692.1 1079.2,692.1 1069.6,692.1 1060.0,692.1 1050.4,692.1 1040.8,692.1 1031.2,692.1 1021.6,692.1 1012.1,692.1 1002.5,692.1 992.9,692.1 983.3,692.1 973.7,692.1 964.1,692.1 954.5,692.1 945.0,692.1 935.4,692.1 925.8,692.1 916.2,692.1 906.6,692.1 897.0,692.1 887.4,692.1 877.9,692.1 868.3,692.1 858.7,692.1 849.1,692.1 839.5,692.1 829.9,692.1 820.3,692.1 810.8,692.1 801.2,692.1 791.6,692.1 782.0,692.1 772.4,692.1 762.8,692.1 753.3,692.1 743.7,692.1 734.1,692.1 724.5,692.1 714.9,692.1 705.3,692.1 695.7,692.1 686.2,692.1 676.3,692.1" fill="#EAB839" fill-opacity="0.1"/><polygon points="676.3,648.9 686.2,648.9 695.7,648.9 705.3,648.9 714.9,648.9 724.5,648.9 734.1,648.9 743.7,648.9 753.3,648.9 762.8,648.9 772.4,648.9 782.0,648.9 791.6,648.9 801.2,648.9 810.8,648.9 820.3,648.9 829.9,648.9 839.5,648.9 849.1,648.9 858.7,648.9 868.3,648.9 877.9,648.9 887.4,648.9 897.0,648.9 906.6,648.9 916.2,648.9 925.8,648.9 935.4,648.9 945.0,648.9 954.5,648.9 964.1,648.9 973.7,648.9 983.3,648.9 992.9,648.9 1002.5,648.9 1012.1,648.9 1021.6,648.9 1031.2,648.9 1040.8,648.9 1050.4,648.9 1060.0,648.9 1069.6,648.9 1079.2,648.9 1088.7,648.9 1098.3,648.9 1107.9,648.9 1117.5,648.9 1127.1,648.9 1136.7,648.9 1146.3,648.9 1155.8,648.9 1165.4,648.9 1175.0,648.9 1184.6,648.9 1184.6,661.1 1175.0,661.1 1165.4,661.1 1155.8,661.1 1146.3,661.1 1136.7,661.1 1127.1,661.1 1117.5,661.1 1107.9,661.1 1098.3,661.1 1088.7,661.1 1079.2,661.1 1069.6,661.1 1060.0,661.1 1050.4,661.1 1040.8,661.1 1031.2,661.1 1021.6,661.1 1012.1,661.1 1002.5,661.1 992.9,661.1 983.3,661.1 973.7,661.1 964.1,661.1 954.5,661.1 945.0,661.1 935.4,661.1 925.8,661.1 916.2,661.1 906.6,661.1 897.0,661.1 887.4,661.1 877.9,661.1 868.3,661.1 858.7,661.1 849.1,661.1 839.5,661.1 829.9,661.1 820.3,661.1 810.8,661.1 801.2,661.1 791.6,661.1 782.0,661.1 772.4,661.1 762.8,661.1 753.3,661.1 743.7,661.1 734.1,661.1 724.5,661.1 714.9,661.1 705.3,661.1 695.7,661.1 686.2,661.1 676.3,661.1" fill="#6ED0E0" fill-opacity="0.1"/><polygon points="676.3,604.0 686.2,604.0 695.7,604.0 705.3,604.0 714.9,604.0 724.5,604.0 734.1,604.0 743.7,604.0 753.3,604.0 762.8,604.0 772.4,604.0 782.0,604.0 791.6,604.0 801.2,604.0 810.8,604.0 820.3,604.0 829.9,604.0 839.5,604.0 849.1,604.0 858.7,604.0 868.3,604.0 877.9,604.0 887.4,604.0 897.0,604.0 906.6,604.0 916.2,604.0 925.8,604.0 935.4,604.0 945.0,604.0 954.5,604.0 964.1,604.0 973.7,604.0 983.3,604.0 992.9,604.0 1002.5,604.0 1012.1,604.0 1021.6,604.0 1031.2,604.0 1040.8,604.0 1050.4,604.0 1060.0,604.0 1069.6,604.0 1079.2,604.0 1088.7,604.0 1098.3,604.0 1107.9,604.0 1117.5,604.0 1127.1,604.0 1136.7,604.0 1146.3,604.0 1155.8,604.0 1165.4,604.0 1175.0,604.0 1184.6,604.0 1184.6,648.9 1175.0,648.9 1165.4,648.9 1155.8,648.9 1146.3,648.9 1136.7,648.9 1127.1,648.9 1117.5,648.9 1107.9,648.9 1098.3,648.9 1088.7,648.9 1079.2,648.9 1069.6,648.9 1060.0,648.9 1050.4,648.9 1040.8,648.9 1031.2,648.9 1021.6,648.9 1012.1,648.9 1002.5,648.9 992.9,648.9 983.3,648.9 973.7,648.9 964.1,648.9 954.5,648.9 945.0,648.9 935.4,648.9 925.8,648.9 916.2,648.9 906.6,648.9 897.0,648.9 887.4,648.9 877.9,648.9 868.3,648.9 858.7,648.9 849.1,648.9 839.5,648.9 829.9,648.9 820.3,648.9 810.8,648.9 801.2,648.9 791.6,648.9 782.0,648.9 772.4,648.9 762.8,648.9 753.3,648.9 743.7,648.9 734.1,648.9 724.5,648.9 714.9,648.9 705.3,648.9 695.7,648.9 686.2,648.9 676.3,648.9" fill="#EF843C" fill-opacity="0.1"/><polyline points="676.3,692.1 686.2,692.1 695.7,692.1 705.3,692.1 714.9,692.1 724.5,692.1 734.1,692.1 743.7,692.1 753.3,692.1 762.8,692.1 772.4,692.1 782.0,692.1 791.6,692.1 801.2,692.1 810.8,692.1 820.3,692.1 829.9,692.1 839.5,692.1 849.1,692.1 858.7,692.1 868.3,692.1 877.9,692.1 887.4,692.1 897.0,692.1 906.6,692.1 916.2,692.1 925.8,692.1 935.4,692.1 945.0,692.1 954.5,692.1 964.1,692.1 973.7,692.1 983.3,692.1 992.9,692.1 1002.5,692.1 1012.1,692.1 1021.6,692.1 1031.2,692.1 1040.8,692.1 1050.4,692.1 1060.0,692.1 1069.6,692.1 1079.2,692.1 1088.7,692.1 1098.3,692.1 1107.9,692.1 1117.5,692.1 1127.1,692.1 1136.7,692.1 1146.3,692.1 1155.8,692.1 1165.4,692.1 1175.0,692.1 1184.6,692.1" fill="none" stroke="#7EB26D" stroke-width="1.1" stroke-linejoin="round"/><polyline points="676.3,661.1 686.2,661.1 695.7,661.1 705.3,661.1 714.9,661.1 724.5,661.1 734.1,661.1 743.7,661.1 753.3,661.1 762.8,661.1 772.4,661.1 782.0,661.1 791.6,661.1 801.2,661.1 810.8,661.1 820.3,661.1 829.9,661.1 839.5,661.1 849.1,661.1 858.7,661.1 868.3,661.1 877.9,661.1 887.4,661.1 897.0,661.1 906.6,661.1 916.2,661.1 925.8,661.1 935.4,661.1 945.0,661.1 954.5,661.1 964.1,661.1 973.7,661.1 983.3,661.1 992.9,661.1 1002.5,661.1 1012.1,661.1 1021.6,661.1 1031.2,661.1 1040.8,661.1 1050.4,661.1 1060.0,661.1 1069.6,661.1 1079.2,661.1 1088.7,661.1 1098.3,661.1 1107.9,661.1 1117.5,661.1 1127.1,661.1 1136.7,661.1 1146.3,661.1 1155.8,661.1 1165.4,661.1 1175.0,661.1 1184.6,661.1" fill="none" stroke="#EAB839" stroke-width="1.1" stroke-linejoin="round"/><polyline points="676.3,648.9 686.2,648.9 695.7,648.9 705.3,648.9 714.9,648.9 724.5,648.9 734.1,648.9 743.7,648.9 753.3,648.9 762.8,648.9 772.4,648.9 782.0,648.9 791.6,648.9 801.2,648.9 810.8,648.9 820.3,648.9 829.9,648.9 839.5,648.9 849.1,648.9 858.7,648.9 868.3,648.9 877.9,648.9 887.4,648.9 897.0,648.9 906.6,648.9 916.2,648.9 925.8,648.9 935.4,648.9 945.0,648.9 954.5,648.9 964.1,648.9 973.7,648.9 983.3,648.9 992.9,648.9 1002.5,648.9 1012.1,648.9 1021.6,648.9 1031.2,648.9 1040.8,648.9 1050.4,648.9 1060.0,648.9 1069.6,648.9 1079.2,648.9 1088.7,648.9 1098.3,648.9 1107.9,648.9 1117.5,648.9 1127.1,648.9 1136.7,648.9 1146.3,648.9 1155.8,648.9 1165.4,648.9 1175.0,648.9 1184.6,648.9" fill="none" stroke="#6ED0E0" stroke-width="1.15" stroke-linejoin="round"/><polyline points="676.3,604.0 686.2,604.0 695.7,604.0 705.3,604.0 714.9,604.0 724.5,604.0 734.1,604.0 743.7,604.0 753.3,604.0 762.8,604.0 772.4,604.0 782.0,604.0 791.6,604.0 801.2,604.0 810.8,604.0 820.3,604.0 829.9,604.0 839.5,604.0 849.1,604.0 858.7,604.0 868.3,604.0 877.9,604.0 887.4,604.0 897.0,604.0 906.6,604.0 916.2,604.0 925.8,604.0 935.4,604.0 945.0,604.0 954.5,604.0 964.1,604.0 973.7,604.0 983.3,604.0 992.9,604.0 1002.5,604.0 1012.1,604.0 1021.6,604.0 1031.2,604.0 1040.8,604.0 1050.4,604.0 1060.0,604.0 1069.6,604.0 1079.2,604.0 1088.7,604.0 1098.3,604.0 1107.9,604.0 1117.5,604.0 1127.1,604.0 1136.7,604.0 1146.3,604.0 1155.8,604.0 1165.4,604.0 1175.0,604.0 1184.6,604.0" fill="none" stroke="#EF843C" stroke-width="1.15" stroke-linejoin="round"/></g>
<text x="630.28" y="590.30" font-size="12" fill="#c4c5d2" textLength="40.32" lengthAdjust="spacingAndGlyphs">146 GiB</text>
<text x="627.22" y="632.40" font-size="12" fill="#c4c5d2" textLength="43.38" lengthAdjust="spacingAndGlyphs">97.7 GiB</text>
<text x="627.22" y="674.50" font-size="12" fill="#c4c5d2" textLength="43.38" lengthAdjust="spacingAndGlyphs">48.8 GiB</text>
<text x="641.08" y="716.60" font-size="12" fill="#c4c5d2" textLength="29.52" lengthAdjust="spacingAndGlyphs">0 MiB</text>
<text x="719.18" y="731.50" font-size="12" fill="#c4c5d2" textLength="28.84" lengthAdjust="spacingAndGlyphs">17:48</text>
<text x="834.20" y="731.50" font-size="12" fill="#c4c5d2" textLength="28.84" lengthAdjust="spacingAndGlyphs">17:50</text>
<text x="949.23" y="731.50" font-size="12" fill="#c4c5d2" textLength="28.84" lengthAdjust="spacingAndGlyphs">17:52</text>
<text x="1064.25" y="731.50" font-size="12" fill="#c4c5d2" textLength="28.84" lengthAdjust="spacingAndGlyphs">17:54</text>
<text x="1179.28" y="731.50" font-size="12" fill="#c4c5d2" textLength="28.84" lengthAdjust="spacingAndGlyphs">17:56</text>
<rect x="635.1" y="748.1" width="14" height="4" rx="1" fill="#7EB26D"/>
<text x="663.10" y="752.40" font-size="12" fill="#ccccdc" textLength="27.62" lengthAdjust="spacingAndGlyphs">Used</text>
<text x="703.12" y="752.40" font-size="12" fill="#ccccdc" textLength="71.78" lengthAdjust="spacingAndGlyphs">Min: 23.6 GiB</text>
<text x="781.70" y="752.40" font-size="12" fill="#ccccdc" textLength="74.74" lengthAdjust="spacingAndGlyphs">Max: 23.7 GiB</text>
<text x="863.25" y="752.40" font-size="12" fill="#ccccdc" textLength="71.76" lengthAdjust="spacingAndGlyphs">Avg: 23.7 GiB</text>
<rect x="635.1" y="769.1" width="14" height="4" rx="1" fill="#EAB839"/>
<text x="663.10" y="773.40" font-size="12" fill="#ccccdc" textLength="41.13" lengthAdjust="spacingAndGlyphs">Cached</text>
<text x="716.63" y="773.40" font-size="12" fill="#ccccdc" textLength="71.78" lengthAdjust="spacingAndGlyphs">Min: 35.8 GiB</text>
<text x="795.21" y="773.40" font-size="12" fill="#ccccdc" textLength="74.74" lengthAdjust="spacingAndGlyphs">Max: 36.1 GiB</text>
<text x="876.75" y="773.40" font-size="12" fill="#ccccdc" textLength="71.76" lengthAdjust="spacingAndGlyphs">Avg: 35.9 GiB</text>
<rect x="635.1" y="790.1" width="14" height="4" rx="1" fill="#6ED0E0"/>
<text x="663.10" y="794.40" font-size="12" fill="#ccccdc" textLength="39.66" lengthAdjust="spacingAndGlyphs">Buffers</text>
<text x="715.16" y="794.40" font-size="12" fill="#ccccdc" textLength="71.78" lengthAdjust="spacingAndGlyphs">Min: 14.7 GiB</text>
<text x="793.74" y="794.40" font-size="12" fill="#ccccdc" textLength="74.74" lengthAdjust="spacingAndGlyphs">Max: 14.7 GiB</text>
<text x="875.28" y="794.40" font-size="12" fill="#ccccdc" textLength="71.76" lengthAdjust="spacingAndGlyphs">Avg: 14.7 GiB</text>
<rect x="635.1" y="811.1" width="14" height="4" rx="1" fill="#EF843C"/>
<text x="663.10" y="815.40" font-size="12" fill="#ccccdc" textLength="23.61" lengthAdjust="spacingAndGlyphs">Free</text>
<text x="699.11" y="815.40" font-size="12" fill="#ccccdc" textLength="71.78" lengthAdjust="spacingAndGlyphs">Min: 51.3 GiB</text>
<text x="777.69" y="815.40" font-size="12" fill="#ccccdc" textLength="74.74" lengthAdjust="spacingAndGlyphs">Max: 51.7 GiB</text>
<text x="859.23" y="815.40" font-size="12" fill="#ccccdc" textLength="71.76" lengthAdjust="spacingAndGlyphs">Avg: 51.5 GiB</text></g>
<g id="p9"><rect x="1229.5" y="535.5" width="604" height="295" rx="2.5" fill="#181b1f" stroke="#25272c"/>
<text x="1484.91" y="556.50" font-size="14" fill="#ccccdc" textLength="93.78" lengthAdjust="spacingAndGlyphs" stroke="#ccccdc" stroke-width="0.35">Disk Utilization</text>
<rect x="1273.0" y="597" width="535.8" height="1" fill="rgba(200,200,200,0.22)"/>
<rect x="1273.0" y="626" width="535.8" height="1" fill="rgba(200,200,200,0.22)"/>
<rect x="1273.0" y="654" width="535.8" height="1" fill="rgba(200,200,200,0.22)"/>
<rect x="1273.0" y="683" width="535.8" height="1" fill="rgba(200,200,200,0.22)"/>
<rect x="1273.0" y="712" width="535.8" height="1" fill="rgba(200,200,200,0.22)"/>
<rect x="1331" y="586" width="1" height="127" fill="rgba(200,200,200,0.22)"/>
<rect x="1450" y="586" width="1" height="127" fill="rgba(200,200,200,0.22)"/>
<rect x="1569" y="586" width="1" height="127" fill="rgba(200,200,200,0.22)"/>
<rect x="1688" y="586" width="1" height="127" fill="rgba(200,200,200,0.22)"/>
<rect x="1806" y="586" width="1" height="127" fill="rgba(200,200,200,0.22)"/>
<g clip-path="url(#c8)"><polygon points="1272.8,613.7 1282.7,613.9 1292.6,614.7 1302.5,613.8 1312.4,614.3 1322.3,614.1 1332.2,614.0 1342.1,614.0 1352.0,613.9 1361.9,613.6 1371.8,614.0 1381.7,614.1 1391.6,614.0 1401.5,613.8 1411.4,613.6 1421.3,613.5 1431.2,613.8 1441.1,614.1 1451.0,614.1 1460.9,614.0 1470.8,613.9 1480.7,614.1 1490.6,613.8 1500.5,614.3 1510.4,613.9 1520.3,614.1 1530.2,613.9 1540.1,613.8 1550.0,613.7 1559.9,614.2 1569.8,616.5 1579.7,625.8 1589.6,615.7 1599.5,613.7 1609.4,613.5 1619.3,614.1 1629.2,613.9 1639.1,613.7 1649.0,613.9 1658.9,614.0 1668.8,614.5 1678.7,614.3 1688.6,614.2 1698.5,614.0 1708.4,614.3 1718.3,614.2 1728.2,614.0 1738.1,613.8 1748.0,616.5 1757.9,626.8 1767.7,619.2 1777.6,619.4 1787.5,615.9 1797.4,614.3 1797.4,712.3 1787.5,712.3 1777.6,712.3 1767.7,712.3 1757.9,712.3 1748.0,712.3 1738.1,712.3 1728.2,712.3 1718.3,712.3 1708.4,712.3 1698.5,712.3 1688.6,712.3 1678.7,712.3 1668.8,712.3 1658.9,712.3 1649.0,712.3 1639.1,712.3 1629.2,712.3 1619.3,712.3 1609.4,712.3 1599.5,712.3 1589.6,712.3 1579.7,712.3 1569.8,712.3 1559.9,712.3 1550.0,712.3 1540.1,712.3 1530.2,712.3 1520.3,712.3 1510.4,712.3 1500.5,712.3 1490.6,712.3 1480.7,712.3 1470.8,712.3 1460.9,712.3 1451.0,712.3 1441.1,712.3 1431.2,712.3 1421.3,712.3 1411.4,712.3 1401.5,712.3 1391.6,712.3 1381.7,712.3 1371.8,712.3 1361.9,712.3 1352.0,712.3 1342.1,712.3 1332.2,712.3 1322.3,712.3 1312.4,712.3 1302.5,712.3 1292.6,712.3 1282.7,712.3 1272.8,712.3" fill="#69553a"/><rect x="1273.0" y="597" width="535.8" height="1" fill="rgba(220,200,180,0.10)"/><rect x="1273.0" y="626" width="535.8" height="1" fill="rgba(220,200,180,0.10)"/><rect x="1273.0" y="654" width="535.8" height="1" fill="rgba(220,200,180,0.10)"/><rect x="1273.0" y="683" width="535.8" height="1" fill="rgba(220,200,180,0.10)"/><rect x="1331" y="586" width="1" height="127" fill="rgba(220,200,180,0.10)"/><rect x="1450" y="586" width="1" height="127" fill="rgba(220,200,180,0.10)"/><rect x="1569" y="586" width="1" height="127" fill="rgba(220,200,180,0.10)"/><rect x="1688" y="586" width="1" height="127" fill="rgba(220,200,180,0.10)"/><rect x="1806" y="586" width="1" height="127" fill="rgba(220,200,180,0.10)"/><polyline points="1272.8,678.5 1282.7,653.9 1292.6,711.0 1302.5,656.0 1312.4,650.3 1322.3,698.3 1332.2,711.3 1342.1,711.7 1352.0,711.7 1361.9,711.7 1371.8,711.7 1381.7,711.7 1391.6,711.7 1401.5,711.7 1411.4,711.7 1421.3,711.7 1431.2,711.7 1441.1,711.7 1451.0,711.7 1460.9,711.7 1470.8,711.7 1480.7,711.7 1490.6,711.7 1500.5,711.7 1510.4,711.7 1520.3,711.7 1530.2,711.7 1540.1,711.7 1550.0,711.7 1559.9,711.7 1569.8,711.7 1579.7,711.3 1589.6,709.1 1599.5,711.3 1609.4,711.7 1619.3,711.7 1629.2,711.6 1639.1,710.5 1649.0,711.6 1658.9,711.7 1668.8,711.7 1678.7,711.7 1688.6,711.7 1698.5,711.7 1708.4,711.7 1718.3,711.7 1728.2,711.7 1738.1,711.7 1748.0,711.7 1757.9,711.7 1767.7,711.7 1777.6,711.7 1787.5,711.7 1797.4,711.7" fill="none" stroke="#94914f" stroke-width="0.9" stroke-linejoin="round"/><polyline points="1272.8,711.9 1282.7,711.2 1292.6,709.6 1302.5,711.2 1312.4,711.9 1322.3,711.9 1332.2,711.9 1342.1,711.9 1352.0,711.9 1361.9,711.9 1371.8,711.9 1381.7,711.9 1391.6,711.9 1401.5,711.9 1411.4,711.9 1421.3,711.9 1431.2,711.9 1441.1,711.9 1451.0,711.9 1460.9,711.9 1470.8,711.9 1480.7,711.9 1490.6,711.9 1500.5,711.9 1510.4,711.9 1520.3,711.9 1530.2,711.9 1540.1,711.9 1550.0,711.9 1559.9,711.9 1569.8,711.9 1579.7,711.9 1589.6,711.9 1599.5,711.9 1609.4,711.9 1619.3,711.9 1629.2,711.9 1639.1,711.9 1649.0,711.9 1658.9,711.9 1668.8,711.9 1678.7,711.9 1688.6,711.9 1698.5,711.9 1708.4,711.9 1718.3,711.9 1728.2,711.9 1738.1,711.9 1748.0,711.9 1757.9,711.9 1767.7,711.9 1777.6,711.9 1787.5,711.9 1797.4,711.9" fill="none" stroke="#94914f" stroke-width="0.9" stroke-linejoin="round"/><polyline points="1272.8,612.6 1282.7,612.6 1292.6,613.3 1302.5,613.4 1312.4,613.5 1322.3,613.5 1332.2,613.1 1342.1,612.9 1352.0,613.3 1361.9,612.8 1371.8,613.4 1381.7,613.5 1391.6,613.6 1401.5,612.8 1411.4,612.2 1421.3,612.2 1431.2,613.2 1441.1,612.7 1451.0,613.5 1460.9,613.3 1470.8,612.4 1480.7,613.6 1490.6,612.2 1500.5,613.9 1510.4,613.5 1520.3,612.8 1530.2,613.3 1540.1,613.2 1550.0,612.2 1559.9,613.6 1569.8,615.1 1579.7,622.5 1589.6,615.1 1599.5,613.5 1609.4,612.0 1619.3,612.9 1629.2,613.2 1639.1,612.9 1649.0,612.5 1658.9,613.7 1668.8,614.1 1678.7,613.1 1688.6,612.8 1698.5,613.3 1708.4,613.3 1718.3,613.6 1728.2,613.1 1738.1,612.7 1748.0,614.9 1757.9,622.4 1767.7,616.7 1777.6,618.8 1787.5,614.9 1797.4,613.7" fill="none" stroke="#1F78C1" stroke-width="1.0" stroke-linejoin="round"/><polyline points="1272.8,613.6 1282.7,612.8 1292.6,614.0 1302.5,613.0 1312.4,614.4 1322.3,614.1 1332.2,614.4 1342.1,612.9 1352.0,613.5 1361.9,612.4 1371.8,613.1 1381.7,613.8 1391.6,612.9 1401.5,612.9 1411.4,613.5 1421.3,613.3 1431.2,613.0 1441.1,614.0 1451.0,614.4 1460.9,612.9 1470.8,614.2 1480.7,614.1 1490.6,613.2 1500.5,613.4 1510.4,614.4 1520.3,613.5 1530.2,612.8 1540.1,612.8 1550.0,614.0 1559.9,614.1 1569.8,616.8 1579.7,627.5 1589.6,615.5 1599.5,614.3 1609.4,613.0 1619.3,613.9 1629.2,614.2 1639.1,613.6 1649.0,614.2 1658.9,613.9 1668.8,614.6 1678.7,613.2 1688.6,613.4 1698.5,613.3 1708.4,613.2 1718.3,613.4 1728.2,613.0 1738.1,613.1 1748.0,616.4 1757.9,627.9 1767.7,618.7 1777.6,618.6 1787.5,615.2 1797.4,614.8" fill="none" stroke="#E24D42" stroke-width="1.0" stroke-linejoin="round"/><polyline points="1272.8,613.0 1282.7,614.5 1292.6,614.3 1302.5,613.9 1312.4,614.8 1322.3,614.8 1332.2,614.1 1342.1,614.2 1352.0,613.2 1361.9,613.7 1371.8,613.9 1381.7,615.0 1391.6,614.3 1401.5,614.4 1411.4,613.7 1421.3,613.2 1431.2,614.6 1441.1,614.9 1451.0,614.1 1460.9,613.5 1470.8,614.2 1480.7,614.3 1490.6,614.5 1500.5,614.7 1510.4,614.1 1520.3,614.4 1530.2,613.8 1540.1,613.2 1550.0,613.1 1559.9,615.2 1569.8,617.3 1579.7,625.6 1589.6,616.6 1599.5,614.0 1609.4,613.0 1619.3,614.9 1629.2,614.3 1639.1,614.7 1649.0,614.4 1658.9,613.5 1668.8,614.9 1678.7,615.0 1688.6,615.1 1698.5,613.9 1708.4,614.5 1718.3,614.8 1728.2,613.6 1738.1,614.6 1748.0,617.2 1757.9,626.2 1767.7,619.6 1777.6,619.4 1787.5,615.5 1797.4,614.7" fill="none" stroke="#6ED0E0" stroke-width="0.8" stroke-linejoin="round"/><polyline points="1272.8,613.8 1282.7,614.3 1292.6,615.6 1302.5,613.5 1312.4,614.1 1322.3,613.6 1332.2,613.7 1342.1,613.5 1352.0,613.7 1361.9,613.9 1371.8,615.0 1381.7,614.7 1391.6,614.1 1401.5,613.9 1411.4,614.2 1421.3,613.6 1431.2,613.4 1441.1,614.9 1451.0,614.6 1460.9,613.7 1470.8,613.5 1480.7,613.7 1490.6,614.8 1500.5,614.0 1510.4,614.4 1520.3,615.1 1530.2,613.4 1540.1,613.9 1550.0,613.9 1559.9,615.2 1569.8,616.3 1579.7,626.9 1589.6,615.6 1599.5,613.3 1609.4,614.1 1619.3,614.9 1629.2,614.1 1639.1,613.3 1649.0,614.5 1658.9,614.7 1668.8,615.1 1678.7,614.3 1688.6,615.0 1698.5,614.5 1708.4,614.7 1718.3,614.6 1728.2,613.9 1738.1,614.0 1748.0,617.3 1757.9,628.6 1767.7,619.3 1777.6,620.2 1787.5,616.7 1797.4,613.9" fill="none" stroke="#EF843C" stroke-width="1.0" stroke-linejoin="round"/><polyline points="1272.8,613.4 1282.7,613.9 1292.6,614.3 1302.5,613.6 1312.4,613.9 1322.3,613.6 1332.2,613.8 1342.1,613.6 1352.0,613.7 1361.9,613.8 1371.8,613.5 1381.7,614.3 1391.6,613.7 1401.5,614.1 1411.4,613.8 1421.3,613.3 1431.2,614.1 1441.1,614.3 1451.0,613.7 1460.9,614.0 1470.8,614.1 1480.7,614.5 1490.6,613.5 1500.5,614.1 1510.4,614.2 1520.3,614.5 1530.2,613.5 1540.1,613.4 1550.0,613.9 1559.9,614.0 1569.8,616.4 1579.7,626.2 1589.6,615.9 1599.5,613.9 1609.4,613.9 1619.3,614.3 1629.2,614.2 1639.1,613.8 1649.0,614.0 1658.9,613.6 1668.8,614.9 1678.7,614.7 1688.6,614.0 1698.5,614.1 1708.4,613.8 1718.3,614.2 1728.2,614.1 1738.1,613.6 1748.0,616.4 1757.9,627.1 1767.7,618.8 1777.6,619.4 1787.5,615.5 1797.4,614.2" fill="none" stroke="#E5AC0E" stroke-width="1.0" stroke-linejoin="round"/><polyline points="1272.8,613.7 1282.7,613.9 1292.6,614.7 1302.5,613.8 1312.4,614.3 1322.3,614.1 1332.2,614.0 1342.1,614.0 1352.0,613.9 1361.9,613.6 1371.8,614.0 1381.7,614.1 1391.6,614.0 1401.5,613.8 1411.4,613.6 1421.3,613.5 1431.2,613.8 1441.1,614.1 1451.0,614.1 1460.9,614.0 1470.8,613.9 1480.7,614.1 1490.6,613.8 1500.5,614.3 1510.4,613.9 1520.3,614.1 1530.2,613.9 1540.1,613.8 1550.0,613.7 1559.9,614.2 1569.8,616.5 1579.7,625.8 1589.6,615.7 1599.5,613.7 1609.4,613.5 1619.3,614.1 1629.2,613.9 1639.1,613.7 1649.0,613.9 1658.9,614.0 1668.8,614.5 1678.7,614.3 1688.6,614.2 1698.5,614.0 1708.4,614.3 1718.3,614.2 1728.2,614.0 1738.1,613.8 1748.0,616.5 1757.9,626.8 1767.7,619.2 1777.6,619.4 1787.5,615.9 1797.4,614.3" fill="none" stroke="#F2C96D" stroke-width="1.1" stroke-linejoin="round"/><polyline points="1272.8,712.6 1282.7,712.6 1292.6,712.6 1302.5,712.6 1312.4,712.6 1322.3,712.6 1332.2,712.6 1342.1,712.6 1352.0,712.6 1361.9,712.6 1371.8,712.6 1381.7,712.6 1391.6,712.6 1401.5,712.6 1411.4,712.6 1421.3,712.6 1431.2,712.6 1441.1,712.6 1451.0,712.6 1460.9,712.6 1470.8,712.6 1480.7,712.6 1490.6,712.6 1500.5,712.6 1510.4,712.6 1520.3,712.6 1530.2,712.6 1540.1,712.6 1550.0,712.6 1559.9,712.6 1569.8,712.6 1579.7,712.6 1589.6,712.6 1599.5,712.6 1609.4,712.6 1619.3,712.6 1629.2,712.6 1639.1,712.6 1649.0,712.6 1658.9,712.6 1668.8,712.6 1678.7,712.6 1688.6,712.6 1698.5,712.6 1708.4,712.6 1718.3,712.6 1728.2,712.6 1738.1,712.6 1748.0,712.6 1757.9,712.6 1767.7,712.6 1777.6,712.6 1787.5,712.6 1797.4,712.6" fill="none" stroke="#a3a39d" stroke-width="2.0" stroke-linejoin="round"/></g>
<text x="1239.78" y="601.60" font-size="12" fill="#c4c5d2" textLength="28.02" lengthAdjust="spacingAndGlyphs">100%</text>
<text x="1246.30" y="630.30" font-size="12" fill="#c4c5d2" textLength="21.50" lengthAdjust="spacingAndGlyphs">75%</text>
<text x="1246.30" y="659.00" font-size="12" fill="#c4c5d2" textLength="21.50" lengthAdjust="spacingAndGlyphs">50%</text>
<text x="1246.30" y="687.70" font-size="12" fill="#c4c5d2" textLength="21.50" lengthAdjust="spacingAndGlyphs">25%</text>
<text x="1252.80" y="716.40" font-size="12" fill="#c4c5d2" textLength="15.00" lengthAdjust="spacingAndGlyphs">0%</text>
<text x="1317.28" y="731.30" font-size="12" fill="#c4c5d2" textLength="28.84" lengthAdjust="spacingAndGlyphs">17:48</text>
<text x="1436.07" y="731.30" font-size="12" fill="#c4c5d2" textLength="28.84" lengthAdjust="spacingAndGlyphs">17:50</text>
<text x="1554.85" y="731.30" font-size="12" fill="#c4c5d2" textLength="28.84" lengthAdjust="spacingAndGlyphs">17:52</text>
<text x="1673.64" y="731.30" font-size="12" fill="#c4c5d2" textLength="28.84" lengthAdjust="spacingAndGlyphs">17:54</text>
<text x="1792.43" y="731.30" font-size="12" fill="#c4c5d2" textLength="28.84" lengthAdjust="spacingAndGlyphs">17:56</text>
<rect x="1248.1" y="748.1" width="14" height="4" rx="1" fill="#0A50A1"/>
<text x="1276.10" y="752.40" font-size="12" fill="#ccccdc" textLength="204.28" lengthAdjust="spacingAndGlyphs">netdata.disk_util.sdw.utilization.mean</text>
<text x="1492.78" y="752.40" font-size="12" fill="#ccccdc" textLength="44.95" lengthAdjust="spacingAndGlyphs">Max: 0%</text>
<text x="1544.53" y="752.40" font-size="12" fill="#ccccdc" textLength="41.98" lengthAdjust="spacingAndGlyphs">Avg: 0%</text>
<rect x="1248.1" y="769.1" width="14" height="4" rx="1" fill="#962D82"/>
<text x="1276.10" y="773.40" font-size="12" fill="#ccccdc" textLength="201.89" lengthAdjust="spacingAndGlyphs">netdata.disk_util.sdx.utilization.mean</text>
<text x="1490.39" y="773.40" font-size="12" fill="#ccccdc" textLength="44.95" lengthAdjust="spacingAndGlyphs">Max: 0%</text>
<text x="1542.14" y="773.40" font-size="12" fill="#ccccdc" textLength="41.98" lengthAdjust="spacingAndGlyphs">Avg: 0%</text>
<rect x="1248.1" y="790.1" width="14" height="4" rx="1" fill="#614D93"/>
<text x="1276.10" y="794.40" font-size="12" fill="#ccccdc" textLength="200.97" lengthAdjust="spacingAndGlyphs">netdata.disk_util.sdy.utilization.mean</text>
<text x="1489.47" y="794.40" font-size="12" fill="#ccccdc" textLength="44.95" lengthAdjust="spacingAndGlyphs">Max: 0%</text>
<text x="1541.22" y="794.40" font-size="12" fill="#ccccdc" textLength="41.98" lengthAdjust="spacingAndGlyphs">Avg: 0%</text>
<rect x="1248.1" y="811.1" width="14" height="4" rx="1" fill="#9AC48A"/>
<text x="1276.10" y="815.40" font-size="12" fill="#ccccdc" textLength="201.89" lengthAdjust="spacingAndGlyphs">netdata.disk_util.sdz.utilization.mean</text>
<text x="1490.39" y="815.40" font-size="12" fill="#ccccdc" textLength="44.95" lengthAdjust="spacingAndGlyphs">Max: 0%</text>
<text x="1542.14" y="815.40" font-size="12" fill="#ccccdc" textLength="41.98" lengthAdjust="spacingAndGlyphs">Avg: 0%</text>
<rect x="1594.8" y="811.1" width="14" height="4" rx="1" fill="#F2C96D"/>
<text x="1622.82" y="815.40" font-size="12" fill="#ccccdc" textLength="30.57" lengthAdjust="spacingAndGlyphs">Mean</text>
<text x="1665.79" y="815.40" font-size="12" fill="#ccccdc" textLength="61.82" lengthAdjust="spacingAndGlyphs">Max: 86.6%</text>
<text x="1734.41" y="815.40" font-size="12" fill="#ccccdc" textLength="58.83" lengthAdjust="spacingAndGlyphs">Avg: 84.6%</text></g>
</svg>
</body></html>
